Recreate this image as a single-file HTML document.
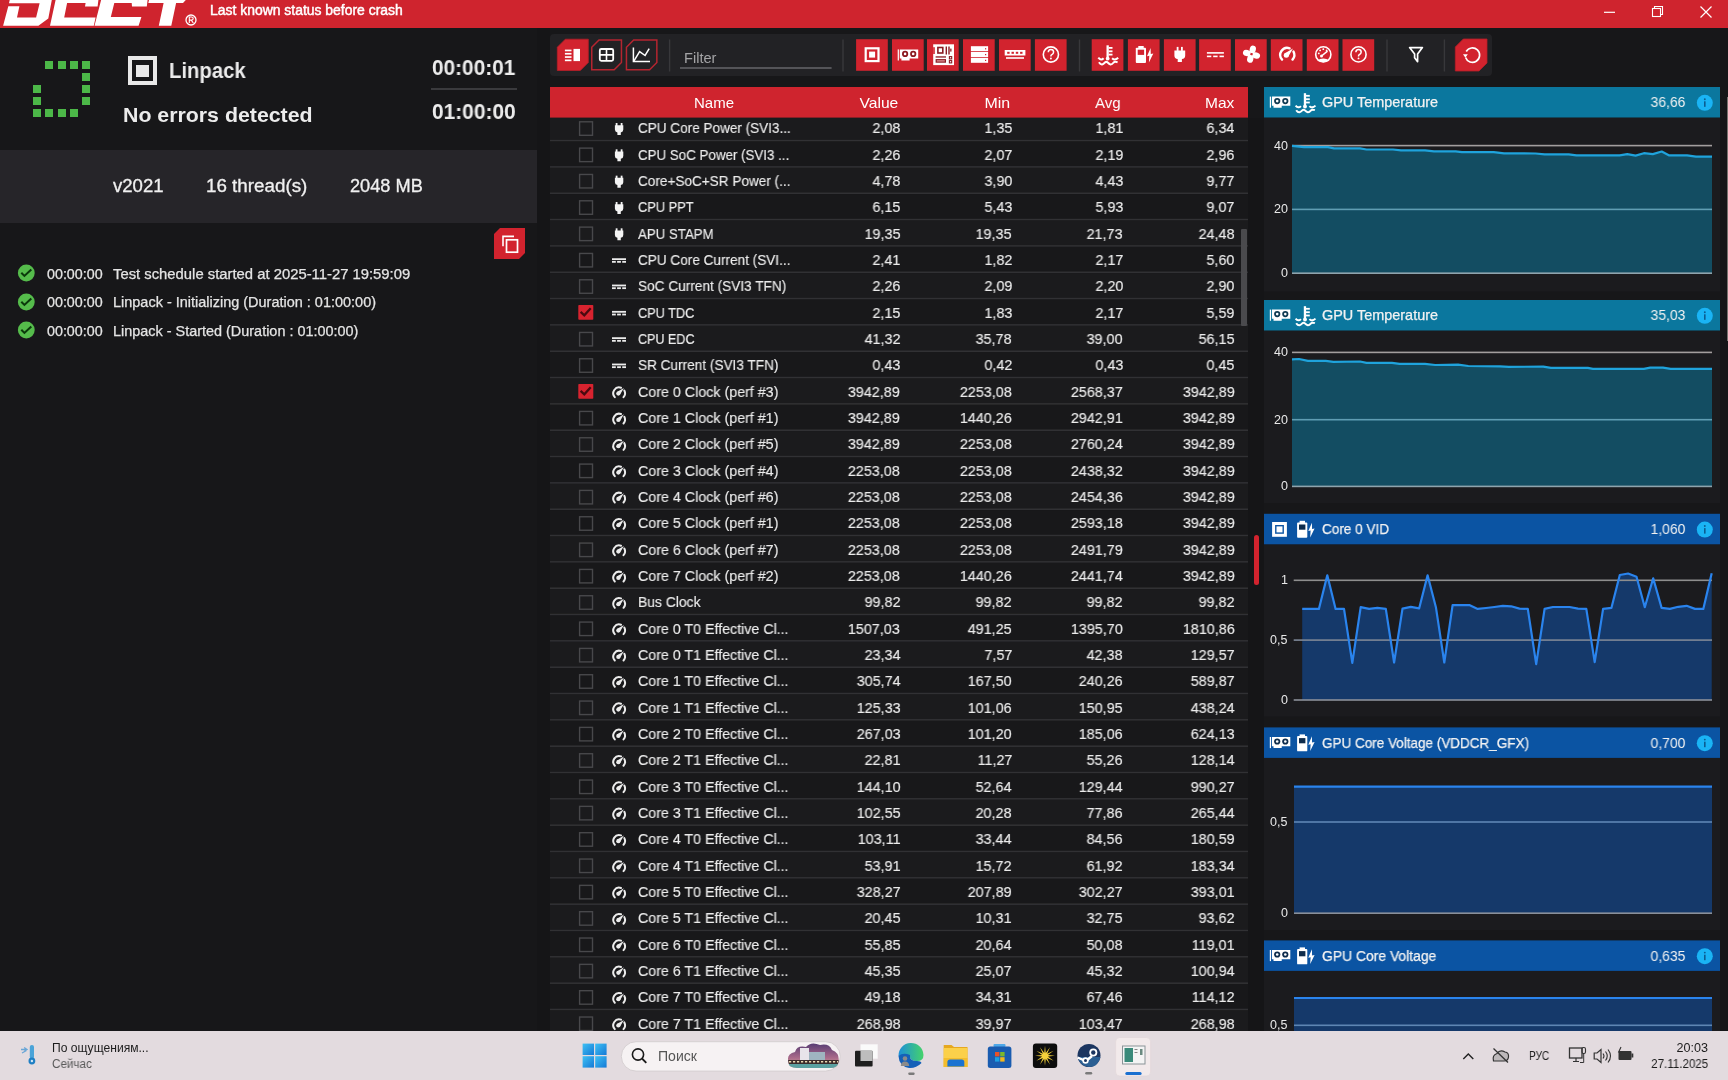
<!DOCTYPE html><html><head><meta charset="utf-8"><style>html,body{margin:0;padding:0;width:1728px;height:1080px;overflow:hidden;background:#171719;}body{position:relative;font-family:"Liberation Sans",sans-serif;}.t{position:absolute;white-space:nowrap;line-height:1;will-change:transform;}</style></head><body>
<div style="position:absolute;left:0px;top:0px;width:1728px;height:27.6px;background:#cf242e;"></div>
<div style="position:absolute;left:0px;top:27.6px;width:1728px;height:0.8px;background:#6a1a20;"></div>
<svg style="position:absolute;left:0;top:0" width="210" height="27" viewBox="0 0 210 27">
<g fill="#fff">
<path d="M9.7,0 L51.8,0 L48.3,18.4 L38.4,25.8 L3.1,25.8 L8.3,6.25 L19.4,6.25 L17,17.4 L36.1,17.4 L39.6,3.3 L9,3.3 Z"/>
<path d="M55.6,0 L98.4,0 L97.6,6.4 L85,6.4 L85.6,2.9 L67.1,2.9 L64.2,17.4 L95.6,17.4 L93.8,25.8 L50,25.8 Z"/>
<path d="M101.1,0 L147.6,0 L146.8,6.6 L132,6.6 L131.7,3.1 L114.3,3.1 L110.8,17 L141.4,17 L138.6,25.7 L94.5,25.7 Z"/>
<path d="M149,0 L185.8,0 L183,3.1 L176.1,3.1 L171.3,25.7 L158.8,25.7 L163.6,3.1 L148.3,3.1 Z"/>
</g>
<circle cx="191" cy="20" r="5" fill="none" stroke="#fff" stroke-width="1.3"/>
<path d="M189.3,23 V17 H191.5 Q193.2,17 193.2,18.6 Q193.2,20.1 191.5,20.1 H189.3 M191.3,20.1 L193.3,23" fill="none" stroke="#fff" stroke-width="1.1"/>
</svg>
<svg style="position:absolute;left:1590px;top:0" width="138" height="27" viewBox="0 0 138 27">
<path d="M14,12.3 H25" stroke="#fff" stroke-width="1.2"/>
<rect x="62.5" y="8.5" width="8" height="8" fill="none" stroke="#fff" stroke-width="1.1"/>
<path d="M64.5,8.5 V6.5 H72.5 V14.5 H70.5" fill="none" stroke="#fff" stroke-width="1.1"/>
<path d="M110.5,6.5 L121.5,17.5 M121.5,6.5 L110.5,17.5" stroke="#fff" stroke-width="1.2"/>
</svg>
<div style="position:absolute;left:0px;top:28px;width:537px;height:1003px;background:#171719;"></div>
<div style="position:absolute;left:45.400000000000006px;top:60.8px;width:8.1px;height:8.1px;background:#4cb848;"></div>
<div style="position:absolute;left:57.6px;top:60.8px;width:8.1px;height:8.1px;background:#4cb848;"></div>
<div style="position:absolute;left:69.8px;top:60.8px;width:8.1px;height:8.1px;background:#4cb848;"></div>
<div style="position:absolute;left:82.0px;top:60.8px;width:8.1px;height:8.1px;background:#4cb848;"></div>
<div style="position:absolute;left:82.0px;top:72.95px;width:8.1px;height:8.1px;background:#4cb848;"></div>
<div style="position:absolute;left:33.2px;top:85.1px;width:8.1px;height:8.1px;background:#4cb848;"></div>
<div style="position:absolute;left:82.0px;top:85.1px;width:8.1px;height:8.1px;background:#4cb848;"></div>
<div style="position:absolute;left:33.2px;top:97.25px;width:8.1px;height:8.1px;background:#4cb848;"></div>
<div style="position:absolute;left:82.0px;top:97.25px;width:8.1px;height:8.1px;background:#4cb848;"></div>
<div style="position:absolute;left:33.2px;top:109.4px;width:8.1px;height:8.1px;background:#4cb848;"></div>
<div style="position:absolute;left:45.400000000000006px;top:109.4px;width:8.1px;height:8.1px;background:#4cb848;"></div>
<div style="position:absolute;left:57.6px;top:109.4px;width:8.1px;height:8.1px;background:#4cb848;"></div>
<div style="position:absolute;left:69.8px;top:109.4px;width:8.1px;height:8.1px;background:#4cb848;"></div>
<div style="position:absolute;left:127.9px;top:55.8px;width:29.2px;height:29.7px;background:transparent;box-sizing:border-box;border:4.3px solid #e8e8e8"></div>
<div style="position:absolute;left:136.4px;top:65.2px;width:12.4px;height:11.8px;background:#e8e8e8;"></div>
<div style="position:absolute;left:431px;top:88px;width:86px;height:2px;background:#3a3a3d;"></div>
<div style="position:absolute;left:0px;top:150px;width:537px;height:73px;background:#262529;"></div>
<svg style="position:absolute;left:494px;top:228px" width="32" height="32" viewBox="0 0 32 32">
<path d="M6,0 H31 V25 L25,31 H0 V6 Z" fill="#d2232e"/>
<path d="M9,18.2 V8.4 H20" fill="none" stroke="#fff" stroke-width="1.6"/>
<rect x="12.5" y="11.8" width="11" height="12.4" fill="none" stroke="#fff" stroke-width="1.7"/>
</svg>
<svg style="position:absolute;left:17px;top:264.3px" width="19" height="18" viewBox="0 0 19 18">
<circle cx="9.3" cy="9" r="8.4" fill="#55bc4b"/>
<path d="M4.3,8.8 L7.4,11.9 L14.3,5.5" fill="none" stroke="#0b3a0b" stroke-width="2.1"/></svg>
<svg style="position:absolute;left:17px;top:292.8px" width="19" height="18" viewBox="0 0 19 18">
<circle cx="9.3" cy="9" r="8.4" fill="#55bc4b"/>
<path d="M4.3,8.8 L7.4,11.9 L14.3,5.5" fill="none" stroke="#0b3a0b" stroke-width="2.1"/></svg>
<svg style="position:absolute;left:17px;top:321.2px" width="19" height="18" viewBox="0 0 19 18">
<circle cx="9.3" cy="9" r="8.4" fill="#55bc4b"/>
<path d="M4.3,8.8 L7.4,11.9 L14.3,5.5" fill="none" stroke="#0b3a0b" stroke-width="2.1"/></svg>
<div style="position:absolute;left:537px;top:28px;width:1191px;height:1003px;background:#171719;"></div>
<div style="position:absolute;left:537.2px;top:28px;width:12.5px;height:1003px;background:#151517;"></div>
<div style="position:absolute;left:1248px;top:117.6px;width:16px;height:913.4px;background:#151517;"></div>
<div style="position:absolute;left:1720.3px;top:28px;width:7.7px;height:1003px;background:#151517;"></div>
<div style="position:absolute;left:549.7px;top:34.2px;width:942px;height:41.6px;background:#222225;border-radius:4px"></div>
<svg style="position:absolute;left:0;top:0" width="1728" height="80"><path d="M557.3,47.2 L565.3,39.2 L588.3,39.2 L588.3,62.5 L580.3,70.5 L557.3,70.5 Z" fill="#d2232e" stroke="#b81d27" stroke-width="0.8"/><path d="M591.75,47.2 L599,39.95 L621.45,39.95 L621.45,62.5 L614.2,69.75 L591.75,69.75 Z" fill="none" stroke="#b52530" stroke-width="1.5"/><path d="M626.45,47.2 L633.7,39.95 L656.85,39.95 L656.85,62.5 L649.6,69.75 L626.45,69.75 Z" fill="none" stroke="#b52530" stroke-width="1.5"/><rect x="564.9" y="49.6" width="6.6" height="1.7" fill="#fff"/><rect x="564.9" y="52.9" width="6.6" height="1.7" fill="#fff"/><rect x="564.9" y="56.2" width="6.6" height="1.7" fill="#fff"/><rect x="564.9" y="59.5" width="6.6" height="1.7" fill="#fff"/><rect x="573.5" y="48.9" width="6.5" height="12.2" fill="#fff"/><rect x="599.8" y="49" width="13.4" height="11.8" rx="1.5" fill="none" stroke="#fff" stroke-width="1.8"/><path d="M606.5,49 V60.8 M599.8,54.9 H613.2" stroke="#fff" stroke-width="1.6"/><path d="M633.4,47.5 V61.6 H650" fill="none" stroke="#fff" stroke-width="1.5"/><path d="M634,60.8 L639.6,51.6 L645.1,55.5 L649.2,48.6" fill="none" stroke="#fff" stroke-width="1.5"/><rect x="668.9" y="39.5" width="1.4" height="32" fill="#38383b"/><rect x="842.3" y="39.5" width="1.4" height="32" fill="#38383b"/><rect x="1078.8" y="39.5" width="1.4" height="32" fill="#38383b"/><rect x="1386.3" y="39.5" width="1.4" height="32" fill="#38383b"/><rect x="1443.7" y="39.5" width="1.4" height="32" fill="#38383b"/><rect x="680" y="67.3" width="151.6" height="1.4" fill="#6a6a6e"/><rect x="856.1" y="39.2" width="31.7" height="31.6" fill="#d2232e"/><rect x="892.0" y="39.2" width="31.7" height="31.6" fill="#d2232e"/><rect x="927.0" y="39.2" width="31.7" height="31.6" fill="#d2232e"/><rect x="963.0" y="39.2" width="31.7" height="31.6" fill="#d2232e"/><rect x="999.0" y="39.2" width="31.7" height="31.6" fill="#d2232e"/><rect x="1034.9" y="39.2" width="31.7" height="31.6" fill="#d2232e"/><rect x="1091.7" y="39.2" width="31.7" height="31.6" fill="#d2232e"/><rect x="1127.9" y="39.2" width="31.7" height="31.6" fill="#d2232e"/><rect x="1163.9" y="39.2" width="31.7" height="31.6" fill="#d2232e"/><rect x="1199.1" y="39.2" width="31.7" height="31.6" fill="#d2232e"/><rect x="1235.0" y="39.2" width="31.7" height="31.6" fill="#d2232e"/><rect x="1270.8" y="39.2" width="31.7" height="31.6" fill="#d2232e"/><rect x="1306.8" y="39.2" width="31.7" height="31.6" fill="#d2232e"/><rect x="1342.5" y="39.2" width="31.7" height="31.6" fill="#d2232e"/><rect x="865.7" y="48.3" width="12.8" height="12.8" fill="none" stroke="#fff" stroke-width="2.2"/><rect x="869.1" y="51.6" width="6" height="6" fill="#fff"/><path d="M899.8000000000001,49.4 H918.2 V58.599999999999994 H909.6 V60.5 H901.4000000000001 V58.599999999999994 H899.8000000000001 Z" fill="#fff"/><rect x="897.7" y="49.4" width="1.2" height="11.1" fill="#fff"/><circle cx="905.1" cy="53.9" r="3.1" fill="#8c1a20"/><circle cx="905.1" cy="53.9" r="1.3" fill="#fff"/><circle cx="913.2" cy="53.9" r="3.1" fill="#8c1a20"/><circle cx="913.2" cy="53.9" r="1.3" fill="#fff"/><rect x="933.2" y="44.3" width="20.8" height="20.8" fill="#fff"/><rect x="933.2" y="47.2" width="1.6" height="6.8" fill="#d2232e"/><rect x="937.9" y="47.5" width="4.9" height="5.5" fill="none" stroke="#8a1c24" stroke-width="1.6"/><rect x="945.6" y="46.5" width="1.4" height="8" fill="#8a1c24"/><rect x="948.3" y="46.5" width="1.4" height="8" fill="#8a1c24"/><rect x="950.2" y="48.6" width="1.3" height="3" fill="#8a1c24"/><rect x="935.6" y="56.3" width="10.4" height="1.3" fill="#8a1c24"/><rect x="936.2" y="59.7" width="9.2" height="2.4" fill="#e8a0a4" stroke="#8a1c24" stroke-width="1.2"/><rect x="949.4" y="56.6" width="2.3" height="2.3" fill="none" stroke="#8a1c24" stroke-width="1.1"/><rect x="949.4" y="60.6" width="2.3" height="2.3" fill="none" stroke="#8a1c24" stroke-width="1.1"/><rect x="970.9" y="46.2" width="17.2" height="5" fill="#fff"/><rect x="985" y="48.2" width="1.2" height="1.2" fill="#d2232e"/><rect x="970.9" y="52" width="17.2" height="5" fill="#fff"/><rect x="985" y="54" width="1.2" height="1.2" fill="#d2232e"/><rect x="970.9" y="57.8" width="17.2" height="5" fill="#fff"/><rect x="985" y="59.8" width="1.2" height="1.2" fill="#d2232e"/><rect x="1004.7" y="50" width="20.7" height="5.5" fill="#fff"/><rect x="1007.2" y="51.8" width="2.4" height="2" fill="#d2232e"/><rect x="1011.5" y="51.8" width="2.4" height="2" fill="#d2232e"/><rect x="1015.8" y="51.8" width="2.4" height="2" fill="#d2232e"/><rect x="1020.1" y="51.8" width="2.4" height="2" fill="#d2232e"/><rect x="1006" y="57.2" width="18" height="1.6" fill="#fff"/><circle cx="1050.9" cy="54.5" r="7.6" fill="none" stroke="#fff" stroke-width="1.6"/><path d="M1048.3000000000002,52.3 Q1048.3000000000002,49.5 1050.9,49.5 Q1053.6000000000001,49.5 1053.6000000000001,52.1 Q1053.6000000000001,53.9 1051.5,54.9 Q1050.9,55.3 1050.9,56.5" fill="none" stroke="#fff" stroke-width="1.5"/><circle cx="1050.9" cy="58.5" r="0.95" fill="#fff"/><g transform="translate(1098,45.3)"><rect x="8.5" y="0" width="2.3" height="14.2" fill="#fff"/><circle cx="9.7" cy="13.3" r="1.9" fill="#fff"/><rect x="10.6" y="1.7" width="3.9" height="1.8" fill="#fff"/><rect x="10.6" y="5.1" width="3.9" height="1.8" fill="#fff"/><rect x="10.6" y="8.4" width="3.9" height="1.8" fill="#fff"/><path d="M0.3,12.4 Q3,15.6 5.6,12.9 M14.1,12.9 Q16.9,15.6 20.2,12.4" fill="none" stroke="#fff" stroke-width="2"/><path d="M0.9,17 Q2.5,19.3 4.1,19.1 Q5.3,18.9 6.9,17.2 Q8.3,15.9 9.7,17.2 Q11.2,18.9 12.5,19.1 Q14,19.3 15.6,17.2 Q17,15.9 19.6,17" fill="none" stroke="#fff" stroke-width="2"/></g><rect x="1138.3" y="46" width="5.4" height="2.2" fill="#fff"/><rect x="1135.8" y="47.7" width="10.2" height="15.2" rx="0.9" fill="#fff"/><rect x="1137.7" y="49.7" width="6.4" height="5.2" fill="#d2232e"/><path d="M1150.6,47.9 L1147.0,56.3 L1149.3,55.8 L1148.8999999999999,62.6 L1153.3,53.6 L1150.8,54.1 Z" fill="#fff"/><g transform="translate(1174.4,46.9) scale(1.0)"><rect x="2.3" y="0" width="1.8" height="4" fill="#fff"/><rect x="6.6" y="0" width="1.8" height="4" fill="#fff"/><path d="M0,3.6 H10.8 V8.5 Q10.8,11.8 7.5,12 V15 H3.3 V12 Q0,11.8 0,8.5 Z" fill="#fff"/></g><rect x="1206.9" y="52.1" width="17" height="1.6" fill="#fff"/><rect x="1206.9" y="55.6" width="4.4" height="1.6" fill="#fff"/><rect x="1213.2" y="55.6" width="4.4" height="1.6" fill="#fff"/><rect x="1219.5" y="55.6" width="4.4" height="1.6" fill="#fff"/><ellipse cx="1251.5" cy="49.400000000000006" rx="3.1" ry="4" fill="#fff" transform="rotate(15 1251.5 54.2)"/><ellipse cx="1251.5" cy="49.400000000000006" rx="3.1" ry="4" fill="#fff" transform="rotate(105 1251.5 54.2)"/><ellipse cx="1251.5" cy="49.400000000000006" rx="3.1" ry="4" fill="#fff" transform="rotate(195 1251.5 54.2)"/><ellipse cx="1251.5" cy="49.400000000000006" rx="3.1" ry="4" fill="#fff" transform="rotate(285 1251.5 54.2)"/><circle cx="1251.5" cy="54.2" r="1.1" fill="#d2232e"/><path d="M1282.08,59.60 A7.02,7.02 0 0 1 1289.59,48.26 M1293.50,51.60 A7.02,7.02 0 0 1 1292.52,59.60" fill="none" stroke="#fff" stroke-width="2.40" stroke-linecap="round"/><path d="M1288.06,57.10 L1293.00,48.60 L1284.50,53.54 Z" fill="#fff"/><circle cx="1286.28" cy="55.32" r="2.52" fill="#fff"/><circle cx="1323.3" cy="54.4" r="7.6" fill="none" stroke="#fff" stroke-width="1.6"/><path d="M1317,60.8 Q1323.3,56 1329.6,60.8 Q1323.3,63.5 1317,60.8 Z" fill="#fff"/><path d="M1321.5,56 L1327.5,51.2" stroke="#fff" stroke-width="1.6"/><circle cx="1321.5" cy="56" r="1.5" fill="#fff"/><circle cx="1318.8" cy="53.4" r="0.9" fill="#fff"/><circle cx="1320.1" cy="50.4" r="0.9" fill="#fff"/><circle cx="1323.3" cy="49.199999999999996" r="0.9" fill="#fff"/><circle cx="1326.6" cy="50.4" r="0.9" fill="#fff"/><circle cx="1358.5" cy="54.4" r="7.6" fill="none" stroke="#fff" stroke-width="1.6"/><path d="M1355.9,52.199999999999996 Q1355.9,49.4 1358.5,49.4 Q1361.2,49.4 1361.2,52.0 Q1361.2,53.8 1359.1,54.8 Q1358.5,55.199999999999996 1358.5,56.4" fill="none" stroke="#fff" stroke-width="1.5"/><circle cx="1358.5" cy="58.4" r="0.95" fill="#fff"/><path d="M1409.6,47.6 H1422.4 L1417.6,54 V61.6 L1414.6,57.8 V54 Z" fill="none" stroke="#fff" stroke-width="1.7" stroke-linejoin="round"/><path d="M1455.3,47 L1463.3,39 L1487.0,39 L1487.0,63 L1479.0,71 L1455.3,71 Z" fill="#d2232e" stroke="#b81d27" stroke-width="0.8"/><path d="M1466.2,51.5 A7.2,7.2 0 1 1 1465.6,57.5" fill="none" stroke="#fff" stroke-width="1.7"/><path d="M1463,54.2 L1467.8,54.2 L1465.4,57.8 Z" fill="#fff"/></svg>
<div style="position:absolute;left:550px;top:87px;width:698px;height:30.6px;background:#cf242e;"></div>
<svg style="position:absolute;left:0;top:0" width="1728" height="1031"><rect x="550" y="117.60" width="698" height="22.20" fill="#1b1b1d"/><rect x="550" y="139.80" width="698" height="1.8" fill="#313134"/><rect x="579.6" y="121.80" width="12.9" height="13.5" fill="none" stroke="#48484b" stroke-width="1.4"/><g transform="translate(614.9,123.00)"><rect x="0.8" y="0" width="1.8" height="3" fill="#f4f4f4"/><rect x="5.8" y="0" width="1.8" height="3" fill="#f4f4f4"/><path d="M0,2.2 H8.4 V6.6 Q8.4,9.1 5.9,9.4 V12 H2.5 V9.4 Q0,9.1 0,6.6 Z" fill="#f4f4f4"/></g><rect x="550" y="141.40" width="698" height="24.73" fill="#18181a"/><rect x="550" y="166.13" width="698" height="1.8" fill="#313134"/><rect x="579.6" y="148.13" width="12.9" height="13.5" fill="none" stroke="#48484b" stroke-width="1.4"/><g transform="translate(614.9,149.33)"><rect x="0.8" y="0" width="1.8" height="3" fill="#f4f4f4"/><rect x="5.8" y="0" width="1.8" height="3" fill="#f4f4f4"/><path d="M0,2.2 H8.4 V6.6 Q8.4,9.1 5.9,9.4 V12 H2.5 V9.4 Q0,9.1 0,6.6 Z" fill="#f4f4f4"/></g><rect x="550" y="167.73" width="698" height="24.73" fill="#1b1b1d"/><rect x="550" y="192.46" width="698" height="1.8" fill="#313134"/><rect x="579.6" y="174.46" width="12.9" height="13.5" fill="none" stroke="#48484b" stroke-width="1.4"/><g transform="translate(614.9,175.66)"><rect x="0.8" y="0" width="1.8" height="3" fill="#f4f4f4"/><rect x="5.8" y="0" width="1.8" height="3" fill="#f4f4f4"/><path d="M0,2.2 H8.4 V6.6 Q8.4,9.1 5.9,9.4 V12 H2.5 V9.4 Q0,9.1 0,6.6 Z" fill="#f4f4f4"/></g><rect x="550" y="194.06" width="698" height="24.73" fill="#18181a"/><rect x="550" y="218.79" width="698" height="1.8" fill="#313134"/><rect x="579.6" y="200.79" width="12.9" height="13.5" fill="none" stroke="#48484b" stroke-width="1.4"/><g transform="translate(614.9,201.99)"><rect x="0.8" y="0" width="1.8" height="3" fill="#f4f4f4"/><rect x="5.8" y="0" width="1.8" height="3" fill="#f4f4f4"/><path d="M0,2.2 H8.4 V6.6 Q8.4,9.1 5.9,9.4 V12 H2.5 V9.4 Q0,9.1 0,6.6 Z" fill="#f4f4f4"/></g><rect x="550" y="220.39" width="698" height="24.73" fill="#1b1b1d"/><rect x="550" y="245.12" width="698" height="1.8" fill="#313134"/><rect x="579.6" y="227.12" width="12.9" height="13.5" fill="none" stroke="#48484b" stroke-width="1.4"/><g transform="translate(614.9,228.32)"><rect x="0.8" y="0" width="1.8" height="3" fill="#f4f4f4"/><rect x="5.8" y="0" width="1.8" height="3" fill="#f4f4f4"/><path d="M0,2.2 H8.4 V6.6 Q8.4,9.1 5.9,9.4 V12 H2.5 V9.4 Q0,9.1 0,6.6 Z" fill="#f4f4f4"/></g><rect x="550" y="246.72" width="698" height="24.73" fill="#18181a"/><rect x="550" y="271.45" width="698" height="1.8" fill="#313134"/><rect x="579.6" y="253.45" width="12.9" height="13.5" fill="none" stroke="#48484b" stroke-width="1.4"/><rect x="612" y="258.25" width="14" height="1.8" fill="#ececec"/><rect x="612" y="260.95" width="3.8" height="1.8" fill="#ececec"/><rect x="617.1" y="260.95" width="3.8" height="1.8" fill="#ececec"/><rect x="622.2" y="260.95" width="3.8" height="1.8" fill="#ececec"/><rect x="550" y="273.05" width="698" height="24.73" fill="#1b1b1d"/><rect x="550" y="297.78" width="698" height="1.8" fill="#313134"/><rect x="579.6" y="279.78" width="12.9" height="13.5" fill="none" stroke="#48484b" stroke-width="1.4"/><rect x="612" y="284.58" width="14" height="1.8" fill="#ececec"/><rect x="612" y="287.28" width="3.8" height="1.8" fill="#ececec"/><rect x="617.1" y="287.28" width="3.8" height="1.8" fill="#ececec"/><rect x="622.2" y="287.28" width="3.8" height="1.8" fill="#ececec"/><rect x="550" y="299.38" width="698" height="24.73" fill="#18181a"/><rect x="550" y="324.11" width="698" height="1.8" fill="#313134"/><rect x="578.3" y="304.91" width="15" height="14.8" rx="0.8" fill="#d8232f"/><path d="M580.6,311.91 L584.3,315.31 L590.7,308.21" fill="none" stroke="#4a0a10" stroke-width="2.3"/><rect x="612" y="310.91" width="14" height="1.8" fill="#ececec"/><rect x="612" y="313.61" width="3.8" height="1.8" fill="#ececec"/><rect x="617.1" y="313.61" width="3.8" height="1.8" fill="#ececec"/><rect x="622.2" y="313.61" width="3.8" height="1.8" fill="#ececec"/><rect x="550" y="325.71" width="698" height="24.73" fill="#1b1b1d"/><rect x="550" y="350.44" width="698" height="1.8" fill="#313134"/><rect x="579.6" y="332.44" width="12.9" height="13.5" fill="none" stroke="#48484b" stroke-width="1.4"/><rect x="612" y="337.24" width="14" height="1.8" fill="#ececec"/><rect x="612" y="339.94" width="3.8" height="1.8" fill="#ececec"/><rect x="617.1" y="339.94" width="3.8" height="1.8" fill="#ececec"/><rect x="622.2" y="339.94" width="3.8" height="1.8" fill="#ececec"/><rect x="550" y="352.04" width="698" height="24.73" fill="#18181a"/><rect x="550" y="376.77" width="698" height="1.8" fill="#313134"/><rect x="579.6" y="358.77" width="12.9" height="13.5" fill="none" stroke="#48484b" stroke-width="1.4"/><rect x="612" y="363.57" width="14" height="1.8" fill="#ececec"/><rect x="612" y="366.27" width="3.8" height="1.8" fill="#ececec"/><rect x="617.1" y="366.27" width="3.8" height="1.8" fill="#ececec"/><rect x="622.2" y="366.27" width="3.8" height="1.8" fill="#ececec"/><rect x="550" y="378.37" width="698" height="24.73" fill="#1b1b1d"/><rect x="550" y="403.10" width="698" height="1.8" fill="#313134"/><rect x="578.3" y="383.90" width="15" height="14.8" rx="0.8" fill="#d8232f"/><path d="M580.6,390.90 L584.3,394.30 L590.7,387.20" fill="none" stroke="#4a0a10" stroke-width="2.3"/><path d="M614.80,397.16 A5.85,5.85 0 0 1 621.05,387.72 M624.32,390.50 A5.85,5.85 0 0 1 623.50,397.16" fill="none" stroke="#ececec" stroke-width="2.00" stroke-linecap="round"/><path d="M619.78,395.08 L623.90,388.00 L616.82,392.12 Z" fill="#ececec"/><circle cx="618.30" cy="393.60" r="2.10" fill="#ececec"/><rect x="550" y="404.70" width="698" height="24.73" fill="#18181a"/><rect x="550" y="429.43" width="698" height="1.8" fill="#313134"/><rect x="579.6" y="411.43" width="12.9" height="13.5" fill="none" stroke="#48484b" stroke-width="1.4"/><path d="M614.80,423.49 A5.85,5.85 0 0 1 621.05,414.05 M624.32,416.83 A5.85,5.85 0 0 1 623.50,423.49" fill="none" stroke="#ececec" stroke-width="2.00" stroke-linecap="round"/><path d="M619.78,421.41 L623.90,414.33 L616.82,418.45 Z" fill="#ececec"/><circle cx="618.30" cy="419.93" r="2.10" fill="#ececec"/><rect x="550" y="431.03" width="698" height="24.73" fill="#1b1b1d"/><rect x="550" y="455.76" width="698" height="1.8" fill="#313134"/><rect x="579.6" y="437.76" width="12.9" height="13.5" fill="none" stroke="#48484b" stroke-width="1.4"/><path d="M614.80,449.82 A5.85,5.85 0 0 1 621.05,440.38 M624.32,443.16 A5.85,5.85 0 0 1 623.50,449.82" fill="none" stroke="#ececec" stroke-width="2.00" stroke-linecap="round"/><path d="M619.78,447.74 L623.90,440.66 L616.82,444.78 Z" fill="#ececec"/><circle cx="618.30" cy="446.26" r="2.10" fill="#ececec"/><rect x="550" y="457.36" width="698" height="24.73" fill="#18181a"/><rect x="550" y="482.09" width="698" height="1.8" fill="#313134"/><rect x="579.6" y="464.09" width="12.9" height="13.5" fill="none" stroke="#48484b" stroke-width="1.4"/><path d="M614.80,476.15 A5.85,5.85 0 0 1 621.05,466.71 M624.32,469.49 A5.85,5.85 0 0 1 623.50,476.15" fill="none" stroke="#ececec" stroke-width="2.00" stroke-linecap="round"/><path d="M619.78,474.07 L623.90,466.99 L616.82,471.11 Z" fill="#ececec"/><circle cx="618.30" cy="472.59" r="2.10" fill="#ececec"/><rect x="550" y="483.69" width="698" height="24.73" fill="#1b1b1d"/><rect x="550" y="508.42" width="698" height="1.8" fill="#313134"/><rect x="579.6" y="490.42" width="12.9" height="13.5" fill="none" stroke="#48484b" stroke-width="1.4"/><path d="M614.80,502.48 A5.85,5.85 0 0 1 621.05,493.04 M624.32,495.82 A5.85,5.85 0 0 1 623.50,502.48" fill="none" stroke="#ececec" stroke-width="2.00" stroke-linecap="round"/><path d="M619.78,500.40 L623.90,493.32 L616.82,497.44 Z" fill="#ececec"/><circle cx="618.30" cy="498.92" r="2.10" fill="#ececec"/><rect x="550" y="510.02" width="698" height="24.73" fill="#18181a"/><rect x="550" y="534.75" width="698" height="1.8" fill="#313134"/><rect x="579.6" y="516.75" width="12.9" height="13.5" fill="none" stroke="#48484b" stroke-width="1.4"/><path d="M614.80,528.81 A5.85,5.85 0 0 1 621.05,519.37 M624.32,522.15 A5.85,5.85 0 0 1 623.50,528.81" fill="none" stroke="#ececec" stroke-width="2.00" stroke-linecap="round"/><path d="M619.78,526.73 L623.90,519.65 L616.82,523.77 Z" fill="#ececec"/><circle cx="618.30" cy="525.25" r="2.10" fill="#ececec"/><rect x="550" y="536.35" width="698" height="24.73" fill="#1b1b1d"/><rect x="550" y="561.08" width="698" height="1.8" fill="#313134"/><rect x="579.6" y="543.08" width="12.9" height="13.5" fill="none" stroke="#48484b" stroke-width="1.4"/><path d="M614.80,555.14 A5.85,5.85 0 0 1 621.05,545.70 M624.32,548.48 A5.85,5.85 0 0 1 623.50,555.14" fill="none" stroke="#ececec" stroke-width="2.00" stroke-linecap="round"/><path d="M619.78,553.06 L623.90,545.98 L616.82,550.10 Z" fill="#ececec"/><circle cx="618.30" cy="551.58" r="2.10" fill="#ececec"/><rect x="550" y="562.68" width="698" height="24.73" fill="#18181a"/><rect x="550" y="587.41" width="698" height="1.8" fill="#313134"/><rect x="579.6" y="569.41" width="12.9" height="13.5" fill="none" stroke="#48484b" stroke-width="1.4"/><path d="M614.80,581.47 A5.85,5.85 0 0 1 621.05,572.03 M624.32,574.81 A5.85,5.85 0 0 1 623.50,581.47" fill="none" stroke="#ececec" stroke-width="2.00" stroke-linecap="round"/><path d="M619.78,579.39 L623.90,572.31 L616.82,576.43 Z" fill="#ececec"/><circle cx="618.30" cy="577.91" r="2.10" fill="#ececec"/><rect x="550" y="589.01" width="698" height="24.73" fill="#1b1b1d"/><rect x="550" y="613.74" width="698" height="1.8" fill="#313134"/><rect x="579.6" y="595.74" width="12.9" height="13.5" fill="none" stroke="#48484b" stroke-width="1.4"/><path d="M614.80,607.80 A5.85,5.85 0 0 1 621.05,598.36 M624.32,601.14 A5.85,5.85 0 0 1 623.50,607.80" fill="none" stroke="#ececec" stroke-width="2.00" stroke-linecap="round"/><path d="M619.78,605.72 L623.90,598.64 L616.82,602.76 Z" fill="#ececec"/><circle cx="618.30" cy="604.24" r="2.10" fill="#ececec"/><rect x="550" y="615.34" width="698" height="24.73" fill="#18181a"/><rect x="550" y="640.07" width="698" height="1.8" fill="#313134"/><rect x="579.6" y="622.07" width="12.9" height="13.5" fill="none" stroke="#48484b" stroke-width="1.4"/><path d="M614.80,634.13 A5.85,5.85 0 0 1 621.05,624.69 M624.32,627.47 A5.85,5.85 0 0 1 623.50,634.13" fill="none" stroke="#ececec" stroke-width="2.00" stroke-linecap="round"/><path d="M619.78,632.05 L623.90,624.97 L616.82,629.09 Z" fill="#ececec"/><circle cx="618.30" cy="630.57" r="2.10" fill="#ececec"/><rect x="550" y="641.67" width="698" height="24.73" fill="#1b1b1d"/><rect x="550" y="666.40" width="698" height="1.8" fill="#313134"/><rect x="579.6" y="648.40" width="12.9" height="13.5" fill="none" stroke="#48484b" stroke-width="1.4"/><path d="M614.80,660.46 A5.85,5.85 0 0 1 621.05,651.02 M624.32,653.80 A5.85,5.85 0 0 1 623.50,660.46" fill="none" stroke="#ececec" stroke-width="2.00" stroke-linecap="round"/><path d="M619.78,658.38 L623.90,651.30 L616.82,655.42 Z" fill="#ececec"/><circle cx="618.30" cy="656.90" r="2.10" fill="#ececec"/><rect x="550" y="668.00" width="698" height="24.73" fill="#18181a"/><rect x="550" y="692.73" width="698" height="1.8" fill="#313134"/><rect x="579.6" y="674.73" width="12.9" height="13.5" fill="none" stroke="#48484b" stroke-width="1.4"/><path d="M614.80,686.79 A5.85,5.85 0 0 1 621.05,677.35 M624.32,680.13 A5.85,5.85 0 0 1 623.50,686.79" fill="none" stroke="#ececec" stroke-width="2.00" stroke-linecap="round"/><path d="M619.78,684.71 L623.90,677.63 L616.82,681.75 Z" fill="#ececec"/><circle cx="618.30" cy="683.23" r="2.10" fill="#ececec"/><rect x="550" y="694.33" width="698" height="24.73" fill="#1b1b1d"/><rect x="550" y="719.06" width="698" height="1.8" fill="#313134"/><rect x="579.6" y="701.06" width="12.9" height="13.5" fill="none" stroke="#48484b" stroke-width="1.4"/><path d="M614.80,713.12 A5.85,5.85 0 0 1 621.05,703.68 M624.32,706.46 A5.85,5.85 0 0 1 623.50,713.12" fill="none" stroke="#ececec" stroke-width="2.00" stroke-linecap="round"/><path d="M619.78,711.04 L623.90,703.96 L616.82,708.08 Z" fill="#ececec"/><circle cx="618.30" cy="709.56" r="2.10" fill="#ececec"/><rect x="550" y="720.66" width="698" height="24.73" fill="#18181a"/><rect x="550" y="745.39" width="698" height="1.8" fill="#313134"/><rect x="579.6" y="727.39" width="12.9" height="13.5" fill="none" stroke="#48484b" stroke-width="1.4"/><path d="M614.80,739.45 A5.85,5.85 0 0 1 621.05,730.01 M624.32,732.79 A5.85,5.85 0 0 1 623.50,739.45" fill="none" stroke="#ececec" stroke-width="2.00" stroke-linecap="round"/><path d="M619.78,737.37 L623.90,730.29 L616.82,734.41 Z" fill="#ececec"/><circle cx="618.30" cy="735.89" r="2.10" fill="#ececec"/><rect x="550" y="746.99" width="698" height="24.73" fill="#1b1b1d"/><rect x="550" y="771.72" width="698" height="1.8" fill="#313134"/><rect x="579.6" y="753.72" width="12.9" height="13.5" fill="none" stroke="#48484b" stroke-width="1.4"/><path d="M614.80,765.78 A5.85,5.85 0 0 1 621.05,756.34 M624.32,759.12 A5.85,5.85 0 0 1 623.50,765.78" fill="none" stroke="#ececec" stroke-width="2.00" stroke-linecap="round"/><path d="M619.78,763.70 L623.90,756.62 L616.82,760.74 Z" fill="#ececec"/><circle cx="618.30" cy="762.22" r="2.10" fill="#ececec"/><rect x="550" y="773.32" width="698" height="24.73" fill="#18181a"/><rect x="550" y="798.05" width="698" height="1.8" fill="#313134"/><rect x="579.6" y="780.05" width="12.9" height="13.5" fill="none" stroke="#48484b" stroke-width="1.4"/><path d="M614.80,792.11 A5.85,5.85 0 0 1 621.05,782.67 M624.32,785.45 A5.85,5.85 0 0 1 623.50,792.11" fill="none" stroke="#ececec" stroke-width="2.00" stroke-linecap="round"/><path d="M619.78,790.03 L623.90,782.95 L616.82,787.07 Z" fill="#ececec"/><circle cx="618.30" cy="788.55" r="2.10" fill="#ececec"/><rect x="550" y="799.65" width="698" height="24.73" fill="#1b1b1d"/><rect x="550" y="824.38" width="698" height="1.8" fill="#313134"/><rect x="579.6" y="806.38" width="12.9" height="13.5" fill="none" stroke="#48484b" stroke-width="1.4"/><path d="M614.80,818.44 A5.85,5.85 0 0 1 621.05,809.00 M624.32,811.78 A5.85,5.85 0 0 1 623.50,818.44" fill="none" stroke="#ececec" stroke-width="2.00" stroke-linecap="round"/><path d="M619.78,816.36 L623.90,809.28 L616.82,813.40 Z" fill="#ececec"/><circle cx="618.30" cy="814.88" r="2.10" fill="#ececec"/><rect x="550" y="825.98" width="698" height="24.73" fill="#18181a"/><rect x="550" y="850.71" width="698" height="1.8" fill="#313134"/><rect x="579.6" y="832.71" width="12.9" height="13.5" fill="none" stroke="#48484b" stroke-width="1.4"/><path d="M614.80,844.77 A5.85,5.85 0 0 1 621.05,835.33 M624.32,838.11 A5.85,5.85 0 0 1 623.50,844.77" fill="none" stroke="#ececec" stroke-width="2.00" stroke-linecap="round"/><path d="M619.78,842.69 L623.90,835.61 L616.82,839.73 Z" fill="#ececec"/><circle cx="618.30" cy="841.21" r="2.10" fill="#ececec"/><rect x="550" y="852.31" width="698" height="24.73" fill="#1b1b1d"/><rect x="550" y="877.04" width="698" height="1.8" fill="#313134"/><rect x="579.6" y="859.04" width="12.9" height="13.5" fill="none" stroke="#48484b" stroke-width="1.4"/><path d="M614.80,871.10 A5.85,5.85 0 0 1 621.05,861.66 M624.32,864.44 A5.85,5.85 0 0 1 623.50,871.10" fill="none" stroke="#ececec" stroke-width="2.00" stroke-linecap="round"/><path d="M619.78,869.02 L623.90,861.94 L616.82,866.06 Z" fill="#ececec"/><circle cx="618.30" cy="867.54" r="2.10" fill="#ececec"/><rect x="550" y="878.64" width="698" height="24.73" fill="#18181a"/><rect x="550" y="903.37" width="698" height="1.8" fill="#313134"/><rect x="579.6" y="885.37" width="12.9" height="13.5" fill="none" stroke="#48484b" stroke-width="1.4"/><path d="M614.80,897.43 A5.85,5.85 0 0 1 621.05,887.99 M624.32,890.77 A5.85,5.85 0 0 1 623.50,897.43" fill="none" stroke="#ececec" stroke-width="2.00" stroke-linecap="round"/><path d="M619.78,895.35 L623.90,888.27 L616.82,892.39 Z" fill="#ececec"/><circle cx="618.30" cy="893.87" r="2.10" fill="#ececec"/><rect x="550" y="904.97" width="698" height="24.73" fill="#1b1b1d"/><rect x="550" y="929.70" width="698" height="1.8" fill="#313134"/><rect x="579.6" y="911.70" width="12.9" height="13.5" fill="none" stroke="#48484b" stroke-width="1.4"/><path d="M614.80,923.76 A5.85,5.85 0 0 1 621.05,914.32 M624.32,917.10 A5.85,5.85 0 0 1 623.50,923.76" fill="none" stroke="#ececec" stroke-width="2.00" stroke-linecap="round"/><path d="M619.78,921.68 L623.90,914.60 L616.82,918.72 Z" fill="#ececec"/><circle cx="618.30" cy="920.20" r="2.10" fill="#ececec"/><rect x="550" y="931.30" width="698" height="24.73" fill="#18181a"/><rect x="550" y="956.03" width="698" height="1.8" fill="#313134"/><rect x="579.6" y="938.03" width="12.9" height="13.5" fill="none" stroke="#48484b" stroke-width="1.4"/><path d="M614.80,950.09 A5.85,5.85 0 0 1 621.05,940.65 M624.32,943.43 A5.85,5.85 0 0 1 623.50,950.09" fill="none" stroke="#ececec" stroke-width="2.00" stroke-linecap="round"/><path d="M619.78,948.01 L623.90,940.93 L616.82,945.05 Z" fill="#ececec"/><circle cx="618.30" cy="946.53" r="2.10" fill="#ececec"/><rect x="550" y="957.63" width="698" height="24.73" fill="#1b1b1d"/><rect x="550" y="982.36" width="698" height="1.8" fill="#313134"/><rect x="579.6" y="964.36" width="12.9" height="13.5" fill="none" stroke="#48484b" stroke-width="1.4"/><path d="M614.80,976.42 A5.85,5.85 0 0 1 621.05,966.98 M624.32,969.76 A5.85,5.85 0 0 1 623.50,976.42" fill="none" stroke="#ececec" stroke-width="2.00" stroke-linecap="round"/><path d="M619.78,974.34 L623.90,967.26 L616.82,971.38 Z" fill="#ececec"/><circle cx="618.30" cy="972.86" r="2.10" fill="#ececec"/><rect x="550" y="983.96" width="698" height="24.73" fill="#18181a"/><rect x="550" y="1008.69" width="698" height="1.8" fill="#313134"/><rect x="579.6" y="990.69" width="12.9" height="13.5" fill="none" stroke="#48484b" stroke-width="1.4"/><path d="M614.80,1002.75 A5.85,5.85 0 0 1 621.05,993.31 M624.32,996.09 A5.85,5.85 0 0 1 623.50,1002.75" fill="none" stroke="#ececec" stroke-width="2.00" stroke-linecap="round"/><path d="M619.78,1000.67 L623.90,993.59 L616.82,997.71 Z" fill="#ececec"/><circle cx="618.30" cy="999.19" r="2.10" fill="#ececec"/><rect x="550" y="1010.29" width="698" height="24.73" fill="#1b1b1d"/><rect x="579.6" y="1017.02" width="12.9" height="13.5" fill="none" stroke="#48484b" stroke-width="1.4"/><path d="M614.80,1029.08 A5.85,5.85 0 0 1 621.05,1019.64 M624.32,1022.42 A5.85,5.85 0 0 1 623.50,1029.08" fill="none" stroke="#ececec" stroke-width="2.00" stroke-linecap="round"/><path d="M619.78,1027.00 L623.90,1019.92 L616.82,1024.04 Z" fill="#ececec"/><circle cx="618.30" cy="1025.52" r="2.10" fill="#ececec"/></svg>
<div style="position:absolute;left:1240.8px;top:229px;width:6.5px;height:97.4px;background:#4a4a4d;border-radius:1px"></div>
<div style="position:absolute;left:1253.6px;top:535.3px;width:5.6px;height:49.7px;background:#d2232e;border-radius:3px"></div>
<div style="position:absolute;left:1726.8px;top:96.7px;width:1.2px;height:244px;background:#77726e;"></div>
<svg style="position:absolute;left:0;top:0" width="1728" height="1031"><rect x="1264" y="117.5" width="456" height="174.0" fill="#1b1b1e"/><rect x="1264" y="87" width="456" height="30.5" fill="#0b779e"/><path d="M1271.8999999999999,96.6 H1290.3 V105.8 H1281.7 V107.69999999999999 H1273.5 V105.8 H1271.8999999999999 Z" fill="#fff"/><rect x="1269.8" y="96.6" width="1.2" height="11.1" fill="#fff"/><circle cx="1277.2" cy="101.1" r="3.1" fill="#0f3a52"/><circle cx="1277.2" cy="101.1" r="1.3" fill="#fff"/><circle cx="1285.3" cy="101.1" r="3.1" fill="#0f3a52"/><circle cx="1285.3" cy="101.1" r="1.3" fill="#fff"/><g transform="translate(1295.3,93.2)"><rect x="8.5" y="0" width="2.3" height="14.2" fill="#fff"/><circle cx="9.7" cy="13.3" r="1.9" fill="#fff"/><rect x="10.6" y="1.7" width="3.9" height="1.8" fill="#fff"/><rect x="10.6" y="5.1" width="3.9" height="1.8" fill="#fff"/><rect x="10.6" y="8.4" width="3.9" height="1.8" fill="#fff"/><path d="M0.3,12.4 Q3,15.6 5.6,12.9 M14.1,12.9 Q16.9,15.6 20.2,12.4" fill="none" stroke="#fff" stroke-width="2"/><path d="M0.9,17 Q2.5,19.3 4.1,19.1 Q5.3,18.9 6.9,17.2 Q8.3,15.9 9.7,17.2 Q11.2,18.9 12.5,19.1 Q14,19.3 15.6,17.2 Q17,15.9 19.6,17" fill="none" stroke="#fff" stroke-width="2"/></g><circle cx="1704.8" cy="102.8" r="8" fill="#1ab4f5"/><rect x="1704.0" y="101.3" width="1.6" height="5.5" fill="#0b5d92"/><circle cx="1704.8" cy="99.2" r="0.95" fill="#0b5d92"/><polygon points="1292.0,273.2 1292.0,145.8 1304.0,147.1 1328.0,147.1 1334.0,148.4 1360.0,148.4 1366.5,149.5 1393.0,149.5 1401.0,150.3 1425.0,150.3 1434.0,151.3 1455.6,151.3 1462.0,152.2 1493.8,152.2 1504.0,153.4 1535.6,153.5 1544.6,154.4 1568.7,154.4 1576.4,155.4 1619.7,155.4 1627.3,154.1 1635.6,155.6 1643.9,153.2 1652.8,154.1 1661.7,151.5 1669.3,155.4 1687.1,155.4 1696.0,156.6 1712.0,156.6 1712.0,273.2" fill="#134d62"/><rect x="1292" y="144.79999999999998" width="420" height="1.6" fill="#a39e9e"/><rect x="1292" y="208.6" width="420" height="1.6" fill="#5f9db3"/><rect x="1292" y="272.4" width="420" height="1.6" fill="#8fa4ad"/><polyline points="1292.0,145.8 1304.0,147.1 1328.0,147.1 1334.0,148.4 1360.0,148.4 1366.5,149.5 1393.0,149.5 1401.0,150.3 1425.0,150.3 1434.0,151.3 1455.6,151.3 1462.0,152.2 1493.8,152.2 1504.0,153.4 1535.6,153.5 1544.6,154.4 1568.7,154.4 1576.4,155.4 1619.7,155.4 1627.3,154.1 1635.6,155.6 1643.9,153.2 1652.8,154.1 1661.7,151.5 1669.3,155.4 1687.1,155.4 1696.0,156.6 1712.0,156.6" fill="none" stroke="#1fa3dc" stroke-width="2.2" stroke-linejoin="round"/><rect x="1264" y="330.5" width="456" height="172.5" fill="#1b1b1e"/><rect x="1264" y="300" width="456" height="30.5" fill="#0b779e"/><path d="M1271.8999999999999,309.6 H1290.3 V318.8 H1281.7 V320.70000000000005 H1273.5 V318.8 H1271.8999999999999 Z" fill="#fff"/><rect x="1269.8" y="309.6" width="1.2" height="11.1" fill="#fff"/><circle cx="1277.2" cy="314.1" r="3.1" fill="#0f3a52"/><circle cx="1277.2" cy="314.1" r="1.3" fill="#fff"/><circle cx="1285.3" cy="314.1" r="3.1" fill="#0f3a52"/><circle cx="1285.3" cy="314.1" r="1.3" fill="#fff"/><g transform="translate(1295.3,306.2)"><rect x="8.5" y="0" width="2.3" height="14.2" fill="#fff"/><circle cx="9.7" cy="13.3" r="1.9" fill="#fff"/><rect x="10.6" y="1.7" width="3.9" height="1.8" fill="#fff"/><rect x="10.6" y="5.1" width="3.9" height="1.8" fill="#fff"/><rect x="10.6" y="8.4" width="3.9" height="1.8" fill="#fff"/><path d="M0.3,12.4 Q3,15.6 5.6,12.9 M14.1,12.9 Q16.9,15.6 20.2,12.4" fill="none" stroke="#fff" stroke-width="2"/><path d="M0.9,17 Q2.5,19.3 4.1,19.1 Q5.3,18.9 6.9,17.2 Q8.3,15.9 9.7,17.2 Q11.2,18.9 12.5,19.1 Q14,19.3 15.6,17.2 Q17,15.9 19.6,17" fill="none" stroke="#fff" stroke-width="2"/></g><circle cx="1704.8" cy="315.8" r="8" fill="#1ab4f5"/><rect x="1704.0" y="314.3" width="1.6" height="5.5" fill="#0b5d92"/><circle cx="1704.8" cy="312.2" r="0.95" fill="#0b5d92"/><polygon points="1292.0,486.4 1292.0,359.3 1299.0,359.0 1307.9,360.9 1325.7,360.9 1333.4,361.9 1360.1,361.5 1366.5,362.8 1392.0,362.8 1399.6,363.8 1425.0,363.8 1435.2,365.0 1458.1,364.7 1468.3,366.0 1500.0,366.4 1508.9,366.9 1543.3,366.6 1550.9,367.9 1587.8,367.9 1592.9,368.9 1643.9,368.9 1650.2,367.7 1663.0,367.7 1670.6,368.9 1712.0,368.9 1712.0,486.4" fill="#134d62"/><rect x="1292" y="351.59999999999997" width="420" height="1.6" fill="#a39e9e"/><rect x="1292" y="418.9" width="420" height="1.6" fill="#5f9db3"/><rect x="1292" y="485.59999999999997" width="420" height="1.6" fill="#8fa4ad"/><polyline points="1292.0,359.3 1299.0,359.0 1307.9,360.9 1325.7,360.9 1333.4,361.9 1360.1,361.5 1366.5,362.8 1392.0,362.8 1399.6,363.8 1425.0,363.8 1435.2,365.0 1458.1,364.7 1468.3,366.0 1500.0,366.4 1508.9,366.9 1543.3,366.6 1550.9,367.9 1587.8,367.9 1592.9,368.9 1643.9,368.9 1650.2,367.7 1663.0,367.7 1670.6,368.9 1712.0,368.9" fill="none" stroke="#1fa3dc" stroke-width="2.2" stroke-linejoin="round"/><rect x="1264" y="544.3" width="456" height="172.20000000000005" fill="#1b1b1e"/><rect x="1264" y="513.8" width="456" height="30.5" fill="#0b54a3"/><rect x="1273.6" y="523.5" width="11.8" height="11.8" fill="none" stroke="#fff" stroke-width="3"/><rect x="1276.5" y="526.4" width="6" height="6" fill="#fff"/><rect x="1299.6" y="520.8" width="5.4" height="2.2" fill="#fff"/><rect x="1297.1" y="522.5" width="10.2" height="15.2" rx="0.9" fill="#fff"/><rect x="1299.0" y="524.5" width="6.4" height="5.2" fill="#0e2c4c"/><path d="M1311.8999999999999,522.6999999999999 L1308.3,531.0999999999999 L1310.6,530.5999999999999 L1310.1999999999998,537.4 L1314.6,528.4 L1312.1,528.9 Z" fill="#fff"/><circle cx="1704.8" cy="529.5999999999999" r="8" fill="#1ab4f5"/><rect x="1704.0" y="528.0999999999999" width="1.6" height="5.5" fill="#0b5d92"/><circle cx="1704.8" cy="525.9999999999999" r="0.95" fill="#0b5d92"/><polygon points="1302.2,700 1302.2,608.9 1310.6,608.9 1318.9,608.9 1327.3,575.3 1335.6,608.9 1344.0,608.9 1352.3,662.8 1360.7,607.2 1369.1,608.9 1377.4,607.9 1385.8,608.9 1394.1,662.5 1402.5,608.6 1410.8,606.8 1419.2,608.3 1427.6,575.3 1435.9,607.2 1444.3,662.5 1452.6,605.1 1461.0,605.1 1469.3,605.1 1477.7,608.9 1486.1,608.0 1494.4,607.0 1502.8,605.8 1511.1,606.3 1519.5,608.6 1527.8,608.9 1536.2,664.2 1544.6,608.9 1552.9,607.0 1561.3,607.0 1569.6,607.0 1578.0,608.6 1586.3,608.9 1594.7,662.1 1603.1,608.9 1611.4,607.9 1619.8,575.0 1628.1,573.5 1636.5,576.7 1644.8,607.2 1653.2,578.3 1661.6,607.9 1669.9,608.9 1678.3,606.8 1686.6,605.8 1695.0,608.9 1703.3,608.9 1711.7,573.2 1711.7,700" fill="#15396a"/><rect x="1293.7" y="579.5" width="418.29999999999995" height="1.6" fill="#8e8e8e"/><rect x="1293.7" y="639.3000000000001" width="418.29999999999995" height="1.6" fill="#7d8796"/><rect x="1293.7" y="699.2" width="418.29999999999995" height="1.6" fill="#8a909a"/><polyline points="1302.2,608.9 1310.6,608.9 1318.9,608.9 1327.3,575.3 1335.6,608.9 1344.0,608.9 1352.3,662.8 1360.7,607.2 1369.1,608.9 1377.4,607.9 1385.8,608.9 1394.1,662.5 1402.5,608.6 1410.8,606.8 1419.2,608.3 1427.6,575.3 1435.9,607.2 1444.3,662.5 1452.6,605.1 1461.0,605.1 1469.3,605.1 1477.7,608.9 1486.1,608.0 1494.4,607.0 1502.8,605.8 1511.1,606.3 1519.5,608.6 1527.8,608.9 1536.2,664.2 1544.6,608.9 1552.9,607.0 1561.3,607.0 1569.6,607.0 1578.0,608.6 1586.3,608.9 1594.7,662.1 1603.1,608.9 1611.4,607.9 1619.8,575.0 1628.1,573.5 1636.5,576.7 1644.8,607.2 1653.2,578.3 1661.6,607.9 1669.9,608.9 1678.3,606.8 1686.6,605.8 1695.0,608.9 1703.3,608.9 1711.7,573.2" fill="none" stroke="#2a84ee" stroke-width="2.2" stroke-linejoin="round"/><rect x="1264" y="757.9" width="456" height="172.10000000000002" fill="#1b1b1e"/><rect x="1264" y="727.4" width="456" height="30.5" fill="#0b54a3"/><path d="M1271.8999999999999,737.0 H1290.3 V746.2 H1281.7 V748.1 H1273.5 V746.2 H1271.8999999999999 Z" fill="#fff"/><rect x="1269.8" y="737.0" width="1.2" height="11.1" fill="#fff"/><circle cx="1277.2" cy="741.5" r="3.1" fill="#0e2c4c"/><circle cx="1277.2" cy="741.5" r="1.3" fill="#fff"/><circle cx="1285.3" cy="741.5" r="3.1" fill="#0e2c4c"/><circle cx="1285.3" cy="741.5" r="1.3" fill="#fff"/><rect x="1299.6" y="734.4" width="5.4" height="2.2" fill="#fff"/><rect x="1297.1" y="736.1" width="10.2" height="15.2" rx="0.9" fill="#fff"/><rect x="1299.0" y="738.1" width="6.4" height="5.2" fill="#0e2c4c"/><path d="M1311.8999999999999,736.3 L1308.3,744.6999999999999 L1310.6,744.1999999999999 L1310.1999999999998,751.0 L1314.6,742.0 L1312.1,742.5 Z" fill="#fff"/><circle cx="1704.8" cy="743.1999999999999" r="8" fill="#1ab4f5"/><rect x="1704.0" y="741.6999999999999" width="1.6" height="5.5" fill="#0b5d92"/><circle cx="1704.8" cy="739.5999999999999" r="0.95" fill="#0b5d92"/><polygon points="1294.0,913.2 1294.0,786.6 1712.0,786.6 1712.0,913.2" fill="#15396a"/><rect x="1294" y="821.2" width="418" height="1.6" fill="#5e86b3"/><rect x="1294" y="912.4000000000001" width="418" height="1.6" fill="#8a909a"/><polyline points="1294.0,786.6 1712.0,786.6" fill="none" stroke="#2a84ee" stroke-width="2.2" stroke-linejoin="round"/><rect x="1264" y="970.9" width="456" height="60.10000000000002" fill="#1b1b1e"/><rect x="1264" y="940.4" width="456" height="30.5" fill="#0b54a3"/><path d="M1271.8999999999999,950.0 H1290.3 V959.2 H1281.7 V961.1 H1273.5 V959.2 H1271.8999999999999 Z" fill="#fff"/><rect x="1269.8" y="950.0" width="1.2" height="11.1" fill="#fff"/><circle cx="1277.2" cy="954.5" r="3.1" fill="#0e2c4c"/><circle cx="1277.2" cy="954.5" r="1.3" fill="#fff"/><circle cx="1285.3" cy="954.5" r="3.1" fill="#0e2c4c"/><circle cx="1285.3" cy="954.5" r="1.3" fill="#fff"/><rect x="1299.6" y="947.4" width="5.4" height="2.2" fill="#fff"/><rect x="1297.1" y="949.1" width="10.2" height="15.2" rx="0.9" fill="#fff"/><rect x="1299.0" y="951.1" width="6.4" height="5.2" fill="#0e2c4c"/><path d="M1311.8999999999999,949.3 L1308.3,957.6999999999999 L1310.6,957.1999999999999 L1310.1999999999998,964.0 L1314.6,955.0 L1312.1,955.5 Z" fill="#fff"/><circle cx="1704.8" cy="956.1999999999999" r="8" fill="#1ab4f5"/><rect x="1704.0" y="954.6999999999999" width="1.6" height="5.5" fill="#0b5d92"/><circle cx="1704.8" cy="952.5999999999999" r="0.95" fill="#0b5d92"/><polygon points="1294.0,1031 1294.0,998.0 1712.0,998.0 1712.0,1031" fill="#15396a"/><rect x="1294" y="1024.5" width="418" height="1.6" fill="#5e86b3"/><polyline points="1294.0,998.0 1712.0,998.0" fill="none" stroke="#2a84ee" stroke-width="2.2" stroke-linejoin="round"/></svg>
<div style="position:absolute;left:0px;top:1031.4px;width:1728px;height:48.6px;background:#e3dbdf;"></div>
<svg style="position:absolute;left:0;top:0" width="1728" height="1080"><defs><linearGradient id="wg" x1="0" y1="0" x2="1" y2="1"><stop offset="0" stop-color="#3fc1f4"/><stop offset="1" stop-color="#1479d6"/></linearGradient><linearGradient id="eg" x1="0" y1="0" x2="1" y2="1"><stop offset="0" stop-color="#36c9a4"/><stop offset="1" stop-color="#1568c4"/></linearGradient></defs><rect x="29.8" y="1045" width="4.2" height="14" rx="2" fill="#4aa3d8"/><circle cx="31.9" cy="1061" r="3.4" fill="#1f7fc4"/><circle cx="31.9" cy="1061" r="1.2" fill="#cfe6f5"/><path d="M21,1049.5 L27,1049.5 M24.2,1047.5 L27,1049.5 L24.2,1051.5 M22,1053 L26.5,1050.5" fill="none" stroke="#6aa6d6" stroke-width="1.3"/><rect x="582.6" y="1043.6" width="11.4" height="11.4" fill="url(#wg)"/><rect x="595.2" y="1043.6" width="11.4" height="11.4" fill="url(#wg)"/><rect x="582.6" y="1056.1999999999998" width="11.4" height="11.4" fill="url(#wg)"/><rect x="595.2" y="1056.1999999999998" width="11.4" height="11.4" fill="url(#wg)"/><rect x="621.3" y="1041.7" width="219" height="29.4" rx="14.7" fill="#f6f2f3" stroke="#d6d0d2" stroke-width="1"/><circle cx="638" cy="1054.5" r="5.6" fill="none" stroke="#1a1a1a" stroke-width="1.6"/><path d="M642,1058.5 L646.3,1062.8" stroke="#1a1a1a" stroke-width="1.8"/><defs><clipPath id="cl"><path d="M788.5,1062 Q786,1054 795,1052 Q797,1045 806,1047 Q811,1041 820,1045 Q829,1043 832,1050 Q840,1053 838.5,1062 Q838,1068 830,1068 H797 Q788,1068 788.5,1062 Z"/></clipPath><linearGradient id="sky" x1="0" y1="0" x2="0" y2="1"><stop offset="0" stop-color="#4a3570"/><stop offset="0.6" stop-color="#a96a8a"/><stop offset="1" stop-color="#e0b0a0"/></linearGradient><linearGradient id="edg" x1="0" y1="0" x2="1" y2="0"><stop offset="0" stop-color="#1d8fd8"/><stop offset="1" stop-color="#45d36a"/></linearGradient></defs><g clip-path="url(#cl)"><rect x="786" y="1041" width="54" height="28" fill="url(#sky)"/><rect x="800" y="1048" width="9" height="12" fill="#e8e4ea"/><rect x="809" y="1052" width="16" height="8" fill="#9fb4c0"/><rect x="786" y="1060" width="54" height="4" fill="#3a2a2a"/><rect x="786" y="1064" width="54" height="5" fill="#5aa0a0"/></g><path d="M789,1061.8 H838" stroke="#e8d8b0" stroke-width="1.4" stroke-dasharray="2.2,1.8"/><rect x="860.5" y="1044.3" width="17.2" height="14.4" fill="#fafafa"/><rect x="855" y="1050.8" width="17.6" height="15.7" rx="1" fill="#1e1e1e"/><rect x="860.5" y="1050.8" width="12.1" height="10.2" fill="#bdbdbd"/><path d="M898.5,1056 A12.5,12.5 0 0 1 923.5,1055 Q923.5,1061 917,1061 Q909,1061 910,1055 Q903,1056 898.5,1056 Z" fill="url(#edg)"/><path d="M898.5,1056 Q903,1052 910,1055 Q909,1061 917,1061 Q921,1061 921.5,1063 Q916,1068.5 909,1068 Q899,1066 898.5,1056 Z" fill="#1560b8"/><circle cx="905" cy="1058.5" r="2.3" fill="#8a8a8a"/><path d="M900.8,1066 Q901,1061.5 905,1061.5 Q909,1061.5 909.2,1066 Z" fill="#8a8a8a"/><rect x="908.2" y="1072.6" width="6.5" height="2.3" rx="1.1" fill="#7a7a7a"/><path d="M943.7,1045 H951.5 L954,1047 H967.5 V1067 H943.7 Z" fill="#e6a820"/><rect x="943.7" y="1048" width="23.8" height="19" fill="#fbd04a"/><rect x="943.7" y="1058" width="23.8" height="9" fill="#f3bd2e"/><path d="M947.4,1066.6 V1062 Q947.4,1059.4 950,1059.4 H961.7 Q964.3,1059.4 964.3,1062 V1066.6 Z" fill="#1a73d1"/><rect x="993.5" y="1044" width="12" height="3" rx="1" fill="#4fa8e8"/><rect x="987.8" y="1046.5" width="23.6" height="21.5" rx="2.5" fill="#1a5cb0"/><rect x="995" y="1052" width="4.4" height="4.4" fill="#e8532a"/><rect x="1000.2" y="1052" width="4.4" height="4.4" fill="#7cb82a"/><rect x="995" y="1057.2" width="4.4" height="4.4" fill="#1ba1e2"/><rect x="1000.2" y="1057.2" width="4.4" height="4.4" fill="#f2b81c"/><rect x="1032.9" y="1043.6" width="24.3" height="24.3" rx="3" fill="#0d0d0d"/><polygon points="1055.00,1055.80 1047.90,1056.58 1053.66,1060.80 1047.12,1057.92 1050.00,1064.46 1045.78,1058.70 1045.00,1065.80 1044.22,1058.70 1040.00,1064.46 1042.88,1057.92 1036.34,1060.80 1042.10,1056.58 1035.00,1055.80 1042.10,1055.02 1036.34,1050.80 1042.88,1053.68 1040.00,1047.14 1044.22,1052.90 1045.00,1045.80 1045.78,1052.90 1050.00,1047.14 1047.12,1053.68 1053.66,1050.80 1047.90,1055.02" fill="#f5d23a"/><circle cx="1089" cy="1055.5" r="11.5" fill="#1b3560"/><path d="M1077.6,1057 Q1080,1066 1089,1067 Q1098,1067 1100.5,1057 Z" fill="#2f6aa0" opacity="0.8"/><circle cx="1093.3" cy="1052.5" r="4" fill="#fff"/><circle cx="1093.3" cy="1052.5" r="2.2" fill="#1b3560"/><path d="M1077.5,1057.5 L1086,1061 L1092,1056" stroke="#fff" stroke-width="2.4" fill="none"/><circle cx="1085.5" cy="1060.5" r="3.2" fill="#fff"/><circle cx="1085.5" cy="1060.5" r="1.5" fill="#1b3560"/><rect x="1085.2" y="1072" width="7" height="2.5" rx="1.2" fill="#7a7a7a"/><rect x="1115.6" y="1037.5" width="35" height="38.5" rx="4" fill="#f2eaeb" stroke="#e2d8da" stroke-width="0.8"/><rect x="1122.5" y="1046" width="22.5" height="18" fill="#f4f4f4" stroke="#8a9498" stroke-width="1"/><rect x="1124.5" y="1048" width="8.5" height="14" fill="#3a8a7a"/><rect x="1134.5" y="1049" width="3" height="1" fill="#888"/><rect x="1134.5" y="1052" width="3" height="1" fill="#888"/><rect x="1140" y="1049" width="2.5" height="6" fill="#6a8a80"/><rect x="1125.3" y="1072" width="16.3" height="3" rx="1.5" fill="#1a6fd0"/><path d="M1463.3,1059 L1468.3,1054 L1473.3,1059" fill="none" stroke="#222" stroke-width="1.4"/><path d="M1493.5,1061 Q1492,1055 1497,1053.5 Q1500,1049 1505,1052 Q1509,1052.5 1508.5,1057 Q1508,1061 1504,1061 Z" fill="#bdb8ba" stroke="#333" stroke-width="1.2"/><path d="M1493.5,1048.5 L1508,1062.5" stroke="#333" stroke-width="1.3"/><rect x="1569.5" y="1048" width="12.5" height="10" fill="none" stroke="#333" stroke-width="1.3"/><path d="M1573,1061.5 H1579 M1576,1058 V1061.5" stroke="#333" stroke-width="1.2"/><rect x="1582" y="1047.5" width="3.5" height="6" rx="1.5" fill="none" stroke="#333" stroke-width="1.1"/><path d="M1583.7,1053.5 V1062.5 H1580" fill="none" stroke="#333" stroke-width="1"/><path d="M1594.2,1053 H1597 L1601,1049.5 V1062.5 L1597,1059 H1594.2 Z" fill="none" stroke="#333" stroke-width="1.2"/><path d="M1603,1053.5 Q1605,1056 1603,1058.5 M1605.5,1051.5 Q1609,1056 1605.5,1060.5 M1608,1049.5 Q1613,1056 1608,1062.5" fill="none" stroke="#333" stroke-width="1.1"/><rect x="1618.5" y="1051" width="13" height="9" rx="1" fill="#333"/><rect x="1631.5" y="1053.5" width="1.8" height="4" fill="#333"/><path d="M1621,1047 L1618.7,1052 L1621.5,1052 L1620,1056" fill="none" stroke="#333" stroke-width="1.1"/></svg>
<div class="t" style="left:210.20px;transform-origin:0 0;top:3.82px;font-size:13.8px;font-weight:400;color:#fff;transform:scaleX(1.0096);-webkit-text-stroke:0.45px #fff;">Last known status before crash</div>
<div class="t" style="left:169.20px;transform-origin:0 0;top:59.58px;font-size:22px;font-weight:700;color:#ececec;transform:scaleX(0.9213);">Linpack</div>
<div class="t" style="left:123.00px;transform-origin:0 0;top:103.92px;font-size:21px;font-weight:700;color:#ececec;transform:scaleX(1.0153);">No errors detected</div>
<div class="t" style="left:431.50px;transform-origin:0 0;top:56.85px;font-size:21.2px;font-weight:700;color:#ececec;transform:scaleX(0.9822);">00:00:01</div>
<div class="t" style="left:431.50px;transform-origin:0 0;top:100.95px;font-size:21.2px;font-weight:700;color:#ececec;transform:scaleX(0.9869);">01:00:00</div>
<div class="t" style="left:112.80px;transform-origin:0 0;top:177.69px;font-size:17.5px;font-weight:400;color:#f0f0f0;transform:scaleX(1.0611);-webkit-text-stroke:0.3px #f0f0f0;">v2021</div>
<div class="t" style="left:206.30px;transform-origin:0 0;top:177.69px;font-size:17.5px;font-weight:400;color:#f0f0f0;transform:scaleX(1.0736);-webkit-text-stroke:0.3px #f0f0f0;">16 thread(s)</div>
<div class="t" style="left:349.90px;transform-origin:0 0;top:177.69px;font-size:17.5px;font-weight:400;color:#f0f0f0;transform:scaleX(1.0393);-webkit-text-stroke:0.3px #f0f0f0;">2048 MB</div>
<div class="t" style="left:46.80px;transform-origin:0 0;top:266.95px;font-size:14px;font-weight:400;color:#e4e4e4;transform:scaleX(1.0202);-webkit-text-stroke:0.25px #e4e4e4;">00:00:00</div>
<div class="t" style="left:113.40px;transform-origin:0 0;top:266.95px;font-size:14px;font-weight:400;color:#e4e4e4;transform:scaleX(1.0587);-webkit-text-stroke:0.25px #e4e4e4;">Test schedule started at 2025-11-27 19:59:09</div>
<div class="t" style="left:46.80px;transform-origin:0 0;top:295.40px;font-size:14px;font-weight:400;color:#e4e4e4;transform:scaleX(1.0202);-webkit-text-stroke:0.25px #e4e4e4;">00:00:00</div>
<div class="t" style="left:113.40px;transform-origin:0 0;top:295.40px;font-size:14px;font-weight:400;color:#e4e4e4;transform:scaleX(1.0335);-webkit-text-stroke:0.25px #e4e4e4;">Linpack - Initializing (Duration : 01:00:00)</div>
<div class="t" style="left:46.80px;transform-origin:0 0;top:323.85px;font-size:14px;font-weight:400;color:#e4e4e4;transform:scaleX(1.0202);-webkit-text-stroke:0.25px #e4e4e4;">00:00:00</div>
<div class="t" style="left:113.40px;transform-origin:0 0;top:323.85px;font-size:14px;font-weight:400;color:#e4e4e4;transform:scaleX(1.0305);-webkit-text-stroke:0.25px #e4e4e4;">Linpack - Started (Duration : 01:00:00)</div>
<div class="t" style="left:684.20px;transform-origin:0 0;top:51.15px;font-size:14px;font-weight:400;color:#a4a4a6;transform:scaleX(1.0442);">Filter</div>
<div class="t" style="left:693.90px;transform-origin:0 0;top:95.20px;font-size:15px;font-weight:400;color:#fff;">Name</div>
<div class="t" style="right:829.60px;transform-origin:100% 0;top:95.20px;font-size:15px;font-weight:400;color:#fff;transform:scaleX(1.0412);">Value</div>
<div class="t" style="right:717.40px;transform-origin:100% 0;top:95.20px;font-size:15px;font-weight:400;color:#fff;transform:scaleX(1.0632);">Min</div>
<div class="t" style="right:607.20px;transform-origin:100% 0;top:95.20px;font-size:15px;font-weight:400;color:#fff;transform:scaleX(0.9969);">Avg</div>
<div class="t" style="right:493.90px;transform-origin:100% 0;top:95.20px;font-size:15px;font-weight:400;color:#fff;transform:scaleX(1.0337);">Max</div>
<div class="t" style="left:638.30px;transform-origin:0 0;top:121.34px;font-size:14.6px;font-weight:400;color:#ececec;transform:scaleX(0.9281);-webkit-text-stroke:0.15px #ececec;">CPU Core Power (SVI3...</div>
<div class="t" style="right:827.80px;transform-origin:100% 0;top:121.34px;font-size:14.6px;font-weight:400;color:#ececec;transform:scaleX(0.9836);-webkit-text-stroke:0.15px #ececec;">2,08</div>
<div class="t" style="right:716.00px;transform-origin:100% 0;top:121.34px;font-size:14.6px;font-weight:400;color:#ececec;transform:scaleX(0.9836);-webkit-text-stroke:0.15px #ececec;">1,35</div>
<div class="t" style="right:605.00px;transform-origin:100% 0;top:121.34px;font-size:14.6px;font-weight:400;color:#ececec;transform:scaleX(0.9836);-webkit-text-stroke:0.15px #ececec;">1,81</div>
<div class="t" style="right:493.70px;transform-origin:100% 0;top:121.34px;font-size:14.6px;font-weight:400;color:#ececec;transform:scaleX(0.9836);-webkit-text-stroke:0.15px #ececec;">6,34</div>
<div class="t" style="left:638.30px;transform-origin:0 0;top:147.67px;font-size:14.6px;font-weight:400;color:#ececec;transform:scaleX(0.9145);-webkit-text-stroke:0.15px #ececec;">CPU SoC Power (SVI3 ...</div>
<div class="t" style="right:827.80px;transform-origin:100% 0;top:147.67px;font-size:14.6px;font-weight:400;color:#ececec;transform:scaleX(0.9836);-webkit-text-stroke:0.15px #ececec;">2,26</div>
<div class="t" style="right:716.00px;transform-origin:100% 0;top:147.67px;font-size:14.6px;font-weight:400;color:#ececec;transform:scaleX(0.9836);-webkit-text-stroke:0.15px #ececec;">2,07</div>
<div class="t" style="right:605.00px;transform-origin:100% 0;top:147.67px;font-size:14.6px;font-weight:400;color:#ececec;transform:scaleX(0.9836);-webkit-text-stroke:0.15px #ececec;">2,19</div>
<div class="t" style="right:493.70px;transform-origin:100% 0;top:147.67px;font-size:14.6px;font-weight:400;color:#ececec;transform:scaleX(0.9836);-webkit-text-stroke:0.15px #ececec;">2,96</div>
<div class="t" style="left:638.30px;transform-origin:0 0;top:174.00px;font-size:14.6px;font-weight:400;color:#ececec;transform:scaleX(0.9302);-webkit-text-stroke:0.15px #ececec;">Core+SoC+SR Power (...</div>
<div class="t" style="right:827.80px;transform-origin:100% 0;top:174.00px;font-size:14.6px;font-weight:400;color:#ececec;transform:scaleX(0.9836);-webkit-text-stroke:0.15px #ececec;">4,78</div>
<div class="t" style="right:716.00px;transform-origin:100% 0;top:174.00px;font-size:14.6px;font-weight:400;color:#ececec;transform:scaleX(0.9836);-webkit-text-stroke:0.15px #ececec;">3,90</div>
<div class="t" style="right:605.00px;transform-origin:100% 0;top:174.00px;font-size:14.6px;font-weight:400;color:#ececec;transform:scaleX(0.9836);-webkit-text-stroke:0.15px #ececec;">4,43</div>
<div class="t" style="right:493.70px;transform-origin:100% 0;top:174.00px;font-size:14.6px;font-weight:400;color:#ececec;transform:scaleX(0.9836);-webkit-text-stroke:0.15px #ececec;">9,77</div>
<div class="t" style="left:638.30px;transform-origin:0 0;top:200.33px;font-size:14.6px;font-weight:400;color:#ececec;transform:scaleX(0.8806);-webkit-text-stroke:0.15px #ececec;">CPU PPT</div>
<div class="t" style="right:827.80px;transform-origin:100% 0;top:200.33px;font-size:14.6px;font-weight:400;color:#ececec;transform:scaleX(0.9836);-webkit-text-stroke:0.15px #ececec;">6,15</div>
<div class="t" style="right:716.00px;transform-origin:100% 0;top:200.33px;font-size:14.6px;font-weight:400;color:#ececec;transform:scaleX(0.9836);-webkit-text-stroke:0.15px #ececec;">5,43</div>
<div class="t" style="right:605.00px;transform-origin:100% 0;top:200.33px;font-size:14.6px;font-weight:400;color:#ececec;transform:scaleX(0.9836);-webkit-text-stroke:0.15px #ececec;">5,93</div>
<div class="t" style="right:493.70px;transform-origin:100% 0;top:200.33px;font-size:14.6px;font-weight:400;color:#ececec;transform:scaleX(0.9836);-webkit-text-stroke:0.15px #ececec;">9,07</div>
<div class="t" style="left:638.30px;transform-origin:0 0;top:226.66px;font-size:14.6px;font-weight:400;color:#ececec;transform:scaleX(0.9091);-webkit-text-stroke:0.15px #ececec;">APU STAPM</div>
<div class="t" style="right:827.80px;transform-origin:100% 0;top:226.66px;font-size:14.6px;font-weight:400;color:#ececec;transform:scaleX(0.9836);-webkit-text-stroke:0.15px #ececec;">19,35</div>
<div class="t" style="right:716.00px;transform-origin:100% 0;top:226.66px;font-size:14.6px;font-weight:400;color:#ececec;transform:scaleX(0.9836);-webkit-text-stroke:0.15px #ececec;">19,35</div>
<div class="t" style="right:605.00px;transform-origin:100% 0;top:226.66px;font-size:14.6px;font-weight:400;color:#ececec;transform:scaleX(0.9836);-webkit-text-stroke:0.15px #ececec;">21,73</div>
<div class="t" style="right:493.70px;transform-origin:100% 0;top:226.66px;font-size:14.6px;font-weight:400;color:#ececec;transform:scaleX(0.9836);-webkit-text-stroke:0.15px #ececec;">24,48</div>
<div class="t" style="left:638.30px;transform-origin:0 0;top:252.99px;font-size:14.6px;font-weight:400;color:#ececec;transform:scaleX(0.9302);-webkit-text-stroke:0.15px #ececec;">CPU Core Current (SVI...</div>
<div class="t" style="right:827.80px;transform-origin:100% 0;top:252.99px;font-size:14.6px;font-weight:400;color:#ececec;transform:scaleX(0.9836);-webkit-text-stroke:0.15px #ececec;">2,41</div>
<div class="t" style="right:716.00px;transform-origin:100% 0;top:252.99px;font-size:14.6px;font-weight:400;color:#ececec;transform:scaleX(0.9836);-webkit-text-stroke:0.15px #ececec;">1,82</div>
<div class="t" style="right:605.00px;transform-origin:100% 0;top:252.99px;font-size:14.6px;font-weight:400;color:#ececec;transform:scaleX(0.9836);-webkit-text-stroke:0.15px #ececec;">2,17</div>
<div class="t" style="right:493.70px;transform-origin:100% 0;top:252.99px;font-size:14.6px;font-weight:400;color:#ececec;transform:scaleX(0.9836);-webkit-text-stroke:0.15px #ececec;">5,60</div>
<div class="t" style="left:638.30px;transform-origin:0 0;top:279.32px;font-size:14.6px;font-weight:400;color:#ececec;transform:scaleX(0.9345);-webkit-text-stroke:0.15px #ececec;">SoC Current (SVI3 TFN)</div>
<div class="t" style="right:827.80px;transform-origin:100% 0;top:279.32px;font-size:14.6px;font-weight:400;color:#ececec;transform:scaleX(0.9836);-webkit-text-stroke:0.15px #ececec;">2,26</div>
<div class="t" style="right:716.00px;transform-origin:100% 0;top:279.32px;font-size:14.6px;font-weight:400;color:#ececec;transform:scaleX(0.9836);-webkit-text-stroke:0.15px #ececec;">2,09</div>
<div class="t" style="right:605.00px;transform-origin:100% 0;top:279.32px;font-size:14.6px;font-weight:400;color:#ececec;transform:scaleX(0.9836);-webkit-text-stroke:0.15px #ececec;">2,20</div>
<div class="t" style="right:493.70px;transform-origin:100% 0;top:279.32px;font-size:14.6px;font-weight:400;color:#ececec;transform:scaleX(0.9836);-webkit-text-stroke:0.15px #ececec;">2,90</div>
<div class="t" style="left:638.30px;transform-origin:0 0;top:305.65px;font-size:14.6px;font-weight:400;color:#ececec;transform:scaleX(0.8729);-webkit-text-stroke:0.15px #ececec;">CPU TDC</div>
<div class="t" style="right:827.80px;transform-origin:100% 0;top:305.65px;font-size:14.6px;font-weight:400;color:#ececec;transform:scaleX(0.9836);-webkit-text-stroke:0.15px #ececec;">2,15</div>
<div class="t" style="right:716.00px;transform-origin:100% 0;top:305.65px;font-size:14.6px;font-weight:400;color:#ececec;transform:scaleX(0.9836);-webkit-text-stroke:0.15px #ececec;">1,83</div>
<div class="t" style="right:605.00px;transform-origin:100% 0;top:305.65px;font-size:14.6px;font-weight:400;color:#ececec;transform:scaleX(0.9836);-webkit-text-stroke:0.15px #ececec;">2,17</div>
<div class="t" style="right:493.70px;transform-origin:100% 0;top:305.65px;font-size:14.6px;font-weight:400;color:#ececec;transform:scaleX(0.9836);-webkit-text-stroke:0.15px #ececec;">5,59</div>
<div class="t" style="left:638.30px;transform-origin:0 0;top:331.98px;font-size:14.6px;font-weight:400;color:#ececec;transform:scaleX(0.8601);-webkit-text-stroke:0.15px #ececec;">CPU EDC</div>
<div class="t" style="right:827.80px;transform-origin:100% 0;top:331.98px;font-size:14.6px;font-weight:400;color:#ececec;transform:scaleX(0.9836);-webkit-text-stroke:0.15px #ececec;">41,32</div>
<div class="t" style="right:716.00px;transform-origin:100% 0;top:331.98px;font-size:14.6px;font-weight:400;color:#ececec;transform:scaleX(0.9836);-webkit-text-stroke:0.15px #ececec;">35,78</div>
<div class="t" style="right:605.00px;transform-origin:100% 0;top:331.98px;font-size:14.6px;font-weight:400;color:#ececec;transform:scaleX(0.9836);-webkit-text-stroke:0.15px #ececec;">39,00</div>
<div class="t" style="right:493.70px;transform-origin:100% 0;top:331.98px;font-size:14.6px;font-weight:400;color:#ececec;transform:scaleX(0.9836);-webkit-text-stroke:0.15px #ececec;">56,15</div>
<div class="t" style="left:638.30px;transform-origin:0 0;top:358.31px;font-size:14.6px;font-weight:400;color:#ececec;transform:scaleX(0.9325);-webkit-text-stroke:0.15px #ececec;">SR Current (SVI3 TFN)</div>
<div class="t" style="right:827.80px;transform-origin:100% 0;top:358.31px;font-size:14.6px;font-weight:400;color:#ececec;transform:scaleX(0.9836);-webkit-text-stroke:0.15px #ececec;">0,43</div>
<div class="t" style="right:716.00px;transform-origin:100% 0;top:358.31px;font-size:14.6px;font-weight:400;color:#ececec;transform:scaleX(0.9836);-webkit-text-stroke:0.15px #ececec;">0,42</div>
<div class="t" style="right:605.00px;transform-origin:100% 0;top:358.31px;font-size:14.6px;font-weight:400;color:#ececec;transform:scaleX(0.9836);-webkit-text-stroke:0.15px #ececec;">0,43</div>
<div class="t" style="right:493.70px;transform-origin:100% 0;top:358.31px;font-size:14.6px;font-weight:400;color:#ececec;transform:scaleX(0.9836);-webkit-text-stroke:0.15px #ececec;">0,45</div>
<div class="t" style="left:638.30px;transform-origin:0 0;top:384.64px;font-size:14.6px;font-weight:400;color:#ececec;transform:scaleX(0.9780);-webkit-text-stroke:0.15px #ececec;">Core 0 Clock (perf #3)</div>
<div class="t" style="right:827.80px;transform-origin:100% 0;top:384.64px;font-size:14.6px;font-weight:400;color:#ececec;transform:scaleX(0.9836);-webkit-text-stroke:0.15px #ececec;">3942,89</div>
<div class="t" style="right:716.00px;transform-origin:100% 0;top:384.64px;font-size:14.6px;font-weight:400;color:#ececec;transform:scaleX(0.9836);-webkit-text-stroke:0.15px #ececec;">2253,08</div>
<div class="t" style="right:605.00px;transform-origin:100% 0;top:384.64px;font-size:14.6px;font-weight:400;color:#ececec;transform:scaleX(0.9836);-webkit-text-stroke:0.15px #ececec;">2568,37</div>
<div class="t" style="right:493.70px;transform-origin:100% 0;top:384.64px;font-size:14.6px;font-weight:400;color:#ececec;transform:scaleX(0.9836);-webkit-text-stroke:0.15px #ececec;">3942,89</div>
<div class="t" style="left:638.30px;transform-origin:0 0;top:410.97px;font-size:14.6px;font-weight:400;color:#ececec;transform:scaleX(0.9780);-webkit-text-stroke:0.15px #ececec;">Core 1 Clock (perf #1)</div>
<div class="t" style="right:827.80px;transform-origin:100% 0;top:410.97px;font-size:14.6px;font-weight:400;color:#ececec;transform:scaleX(0.9836);-webkit-text-stroke:0.15px #ececec;">3942,89</div>
<div class="t" style="right:716.00px;transform-origin:100% 0;top:410.97px;font-size:14.6px;font-weight:400;color:#ececec;transform:scaleX(0.9836);-webkit-text-stroke:0.15px #ececec;">1440,26</div>
<div class="t" style="right:605.00px;transform-origin:100% 0;top:410.97px;font-size:14.6px;font-weight:400;color:#ececec;transform:scaleX(0.9836);-webkit-text-stroke:0.15px #ececec;">2942,91</div>
<div class="t" style="right:493.70px;transform-origin:100% 0;top:410.97px;font-size:14.6px;font-weight:400;color:#ececec;transform:scaleX(0.9836);-webkit-text-stroke:0.15px #ececec;">3942,89</div>
<div class="t" style="left:638.30px;transform-origin:0 0;top:437.30px;font-size:14.6px;font-weight:400;color:#ececec;transform:scaleX(0.9780);-webkit-text-stroke:0.15px #ececec;">Core 2 Clock (perf #5)</div>
<div class="t" style="right:827.80px;transform-origin:100% 0;top:437.30px;font-size:14.6px;font-weight:400;color:#ececec;transform:scaleX(0.9836);-webkit-text-stroke:0.15px #ececec;">3942,89</div>
<div class="t" style="right:716.00px;transform-origin:100% 0;top:437.30px;font-size:14.6px;font-weight:400;color:#ececec;transform:scaleX(0.9836);-webkit-text-stroke:0.15px #ececec;">2253,08</div>
<div class="t" style="right:605.00px;transform-origin:100% 0;top:437.30px;font-size:14.6px;font-weight:400;color:#ececec;transform:scaleX(0.9836);-webkit-text-stroke:0.15px #ececec;">2760,24</div>
<div class="t" style="right:493.70px;transform-origin:100% 0;top:437.30px;font-size:14.6px;font-weight:400;color:#ececec;transform:scaleX(0.9836);-webkit-text-stroke:0.15px #ececec;">3942,89</div>
<div class="t" style="left:638.30px;transform-origin:0 0;top:463.63px;font-size:14.6px;font-weight:400;color:#ececec;transform:scaleX(0.9780);-webkit-text-stroke:0.15px #ececec;">Core 3 Clock (perf #4)</div>
<div class="t" style="right:827.80px;transform-origin:100% 0;top:463.63px;font-size:14.6px;font-weight:400;color:#ececec;transform:scaleX(0.9836);-webkit-text-stroke:0.15px #ececec;">2253,08</div>
<div class="t" style="right:716.00px;transform-origin:100% 0;top:463.63px;font-size:14.6px;font-weight:400;color:#ececec;transform:scaleX(0.9836);-webkit-text-stroke:0.15px #ececec;">2253,08</div>
<div class="t" style="right:605.00px;transform-origin:100% 0;top:463.63px;font-size:14.6px;font-weight:400;color:#ececec;transform:scaleX(0.9836);-webkit-text-stroke:0.15px #ececec;">2438,32</div>
<div class="t" style="right:493.70px;transform-origin:100% 0;top:463.63px;font-size:14.6px;font-weight:400;color:#ececec;transform:scaleX(0.9836);-webkit-text-stroke:0.15px #ececec;">3942,89</div>
<div class="t" style="left:638.30px;transform-origin:0 0;top:489.96px;font-size:14.6px;font-weight:400;color:#ececec;transform:scaleX(0.9780);-webkit-text-stroke:0.15px #ececec;">Core 4 Clock (perf #6)</div>
<div class="t" style="right:827.80px;transform-origin:100% 0;top:489.96px;font-size:14.6px;font-weight:400;color:#ececec;transform:scaleX(0.9836);-webkit-text-stroke:0.15px #ececec;">2253,08</div>
<div class="t" style="right:716.00px;transform-origin:100% 0;top:489.96px;font-size:14.6px;font-weight:400;color:#ececec;transform:scaleX(0.9836);-webkit-text-stroke:0.15px #ececec;">2253,08</div>
<div class="t" style="right:605.00px;transform-origin:100% 0;top:489.96px;font-size:14.6px;font-weight:400;color:#ececec;transform:scaleX(0.9836);-webkit-text-stroke:0.15px #ececec;">2454,36</div>
<div class="t" style="right:493.70px;transform-origin:100% 0;top:489.96px;font-size:14.6px;font-weight:400;color:#ececec;transform:scaleX(0.9836);-webkit-text-stroke:0.15px #ececec;">3942,89</div>
<div class="t" style="left:638.30px;transform-origin:0 0;top:516.29px;font-size:14.6px;font-weight:400;color:#ececec;transform:scaleX(0.9780);-webkit-text-stroke:0.15px #ececec;">Core 5 Clock (perf #1)</div>
<div class="t" style="right:827.80px;transform-origin:100% 0;top:516.29px;font-size:14.6px;font-weight:400;color:#ececec;transform:scaleX(0.9836);-webkit-text-stroke:0.15px #ececec;">2253,08</div>
<div class="t" style="right:716.00px;transform-origin:100% 0;top:516.29px;font-size:14.6px;font-weight:400;color:#ececec;transform:scaleX(0.9836);-webkit-text-stroke:0.15px #ececec;">2253,08</div>
<div class="t" style="right:605.00px;transform-origin:100% 0;top:516.29px;font-size:14.6px;font-weight:400;color:#ececec;transform:scaleX(0.9836);-webkit-text-stroke:0.15px #ececec;">2593,18</div>
<div class="t" style="right:493.70px;transform-origin:100% 0;top:516.29px;font-size:14.6px;font-weight:400;color:#ececec;transform:scaleX(0.9836);-webkit-text-stroke:0.15px #ececec;">3942,89</div>
<div class="t" style="left:638.30px;transform-origin:0 0;top:542.62px;font-size:14.6px;font-weight:400;color:#ececec;transform:scaleX(0.9780);-webkit-text-stroke:0.15px #ececec;">Core 6 Clock (perf #7)</div>
<div class="t" style="right:827.80px;transform-origin:100% 0;top:542.62px;font-size:14.6px;font-weight:400;color:#ececec;transform:scaleX(0.9836);-webkit-text-stroke:0.15px #ececec;">2253,08</div>
<div class="t" style="right:716.00px;transform-origin:100% 0;top:542.62px;font-size:14.6px;font-weight:400;color:#ececec;transform:scaleX(0.9836);-webkit-text-stroke:0.15px #ececec;">2253,08</div>
<div class="t" style="right:605.00px;transform-origin:100% 0;top:542.62px;font-size:14.6px;font-weight:400;color:#ececec;transform:scaleX(0.9836);-webkit-text-stroke:0.15px #ececec;">2491,79</div>
<div class="t" style="right:493.70px;transform-origin:100% 0;top:542.62px;font-size:14.6px;font-weight:400;color:#ececec;transform:scaleX(0.9836);-webkit-text-stroke:0.15px #ececec;">3942,89</div>
<div class="t" style="left:638.30px;transform-origin:0 0;top:568.95px;font-size:14.6px;font-weight:400;color:#ececec;transform:scaleX(0.9780);-webkit-text-stroke:0.15px #ececec;">Core 7 Clock (perf #2)</div>
<div class="t" style="right:827.80px;transform-origin:100% 0;top:568.95px;font-size:14.6px;font-weight:400;color:#ececec;transform:scaleX(0.9836);-webkit-text-stroke:0.15px #ececec;">2253,08</div>
<div class="t" style="right:716.00px;transform-origin:100% 0;top:568.95px;font-size:14.6px;font-weight:400;color:#ececec;transform:scaleX(0.9836);-webkit-text-stroke:0.15px #ececec;">1440,26</div>
<div class="t" style="right:605.00px;transform-origin:100% 0;top:568.95px;font-size:14.6px;font-weight:400;color:#ececec;transform:scaleX(0.9836);-webkit-text-stroke:0.15px #ececec;">2441,74</div>
<div class="t" style="right:493.70px;transform-origin:100% 0;top:568.95px;font-size:14.6px;font-weight:400;color:#ececec;transform:scaleX(0.9836);-webkit-text-stroke:0.15px #ececec;">3942,89</div>
<div class="t" style="left:638.30px;transform-origin:0 0;top:595.28px;font-size:14.6px;font-weight:400;color:#ececec;transform:scaleX(0.9512);-webkit-text-stroke:0.15px #ececec;">Bus Clock</div>
<div class="t" style="right:827.80px;transform-origin:100% 0;top:595.28px;font-size:14.6px;font-weight:400;color:#ececec;transform:scaleX(0.9836);-webkit-text-stroke:0.15px #ececec;">99,82</div>
<div class="t" style="right:716.00px;transform-origin:100% 0;top:595.28px;font-size:14.6px;font-weight:400;color:#ececec;transform:scaleX(0.9836);-webkit-text-stroke:0.15px #ececec;">99,82</div>
<div class="t" style="right:605.00px;transform-origin:100% 0;top:595.28px;font-size:14.6px;font-weight:400;color:#ececec;transform:scaleX(0.9836);-webkit-text-stroke:0.15px #ececec;">99,82</div>
<div class="t" style="right:493.70px;transform-origin:100% 0;top:595.28px;font-size:14.6px;font-weight:400;color:#ececec;transform:scaleX(0.9836);-webkit-text-stroke:0.15px #ececec;">99,82</div>
<div class="t" style="left:638.30px;transform-origin:0 0;top:621.61px;font-size:14.6px;font-weight:400;color:#ececec;transform:scaleX(0.9754);-webkit-text-stroke:0.15px #ececec;">Core 0 T0 Effective Cl...</div>
<div class="t" style="right:827.80px;transform-origin:100% 0;top:621.61px;font-size:14.6px;font-weight:400;color:#ececec;transform:scaleX(0.9836);-webkit-text-stroke:0.15px #ececec;">1507,03</div>
<div class="t" style="right:716.00px;transform-origin:100% 0;top:621.61px;font-size:14.6px;font-weight:400;color:#ececec;transform:scaleX(0.9836);-webkit-text-stroke:0.15px #ececec;">491,25</div>
<div class="t" style="right:605.00px;transform-origin:100% 0;top:621.61px;font-size:14.6px;font-weight:400;color:#ececec;transform:scaleX(0.9836);-webkit-text-stroke:0.15px #ececec;">1395,70</div>
<div class="t" style="right:493.70px;transform-origin:100% 0;top:621.61px;font-size:14.6px;font-weight:400;color:#ececec;transform:scaleX(0.9836);-webkit-text-stroke:0.15px #ececec;">1810,86</div>
<div class="t" style="left:638.30px;transform-origin:0 0;top:647.94px;font-size:14.6px;font-weight:400;color:#ececec;transform:scaleX(0.9754);-webkit-text-stroke:0.15px #ececec;">Core 0 T1 Effective Cl...</div>
<div class="t" style="right:827.80px;transform-origin:100% 0;top:647.94px;font-size:14.6px;font-weight:400;color:#ececec;transform:scaleX(0.9836);-webkit-text-stroke:0.15px #ececec;">23,34</div>
<div class="t" style="right:716.00px;transform-origin:100% 0;top:647.94px;font-size:14.6px;font-weight:400;color:#ececec;transform:scaleX(0.9836);-webkit-text-stroke:0.15px #ececec;">7,57</div>
<div class="t" style="right:605.00px;transform-origin:100% 0;top:647.94px;font-size:14.6px;font-weight:400;color:#ececec;transform:scaleX(0.9836);-webkit-text-stroke:0.15px #ececec;">42,38</div>
<div class="t" style="right:493.70px;transform-origin:100% 0;top:647.94px;font-size:14.6px;font-weight:400;color:#ececec;transform:scaleX(0.9836);-webkit-text-stroke:0.15px #ececec;">129,57</div>
<div class="t" style="left:638.30px;transform-origin:0 0;top:674.27px;font-size:14.6px;font-weight:400;color:#ececec;transform:scaleX(0.9754);-webkit-text-stroke:0.15px #ececec;">Core 1 T0 Effective Cl...</div>
<div class="t" style="right:827.80px;transform-origin:100% 0;top:674.27px;font-size:14.6px;font-weight:400;color:#ececec;transform:scaleX(0.9836);-webkit-text-stroke:0.15px #ececec;">305,74</div>
<div class="t" style="right:716.00px;transform-origin:100% 0;top:674.27px;font-size:14.6px;font-weight:400;color:#ececec;transform:scaleX(0.9836);-webkit-text-stroke:0.15px #ececec;">167,50</div>
<div class="t" style="right:605.00px;transform-origin:100% 0;top:674.27px;font-size:14.6px;font-weight:400;color:#ececec;transform:scaleX(0.9836);-webkit-text-stroke:0.15px #ececec;">240,26</div>
<div class="t" style="right:493.70px;transform-origin:100% 0;top:674.27px;font-size:14.6px;font-weight:400;color:#ececec;transform:scaleX(0.9836);-webkit-text-stroke:0.15px #ececec;">589,87</div>
<div class="t" style="left:638.30px;transform-origin:0 0;top:700.60px;font-size:14.6px;font-weight:400;color:#ececec;transform:scaleX(0.9754);-webkit-text-stroke:0.15px #ececec;">Core 1 T1 Effective Cl...</div>
<div class="t" style="right:827.80px;transform-origin:100% 0;top:700.60px;font-size:14.6px;font-weight:400;color:#ececec;transform:scaleX(0.9836);-webkit-text-stroke:0.15px #ececec;">125,33</div>
<div class="t" style="right:716.00px;transform-origin:100% 0;top:700.60px;font-size:14.6px;font-weight:400;color:#ececec;transform:scaleX(0.9836);-webkit-text-stroke:0.15px #ececec;">101,06</div>
<div class="t" style="right:605.00px;transform-origin:100% 0;top:700.60px;font-size:14.6px;font-weight:400;color:#ececec;transform:scaleX(0.9836);-webkit-text-stroke:0.15px #ececec;">150,95</div>
<div class="t" style="right:493.70px;transform-origin:100% 0;top:700.60px;font-size:14.6px;font-weight:400;color:#ececec;transform:scaleX(0.9836);-webkit-text-stroke:0.15px #ececec;">438,24</div>
<div class="t" style="left:638.30px;transform-origin:0 0;top:726.93px;font-size:14.6px;font-weight:400;color:#ececec;transform:scaleX(0.9754);-webkit-text-stroke:0.15px #ececec;">Core 2 T0 Effective Cl...</div>
<div class="t" style="right:827.80px;transform-origin:100% 0;top:726.93px;font-size:14.6px;font-weight:400;color:#ececec;transform:scaleX(0.9836);-webkit-text-stroke:0.15px #ececec;">267,03</div>
<div class="t" style="right:716.00px;transform-origin:100% 0;top:726.93px;font-size:14.6px;font-weight:400;color:#ececec;transform:scaleX(0.9836);-webkit-text-stroke:0.15px #ececec;">101,20</div>
<div class="t" style="right:605.00px;transform-origin:100% 0;top:726.93px;font-size:14.6px;font-weight:400;color:#ececec;transform:scaleX(0.9836);-webkit-text-stroke:0.15px #ececec;">185,06</div>
<div class="t" style="right:493.70px;transform-origin:100% 0;top:726.93px;font-size:14.6px;font-weight:400;color:#ececec;transform:scaleX(0.9836);-webkit-text-stroke:0.15px #ececec;">624,13</div>
<div class="t" style="left:638.30px;transform-origin:0 0;top:753.26px;font-size:14.6px;font-weight:400;color:#ececec;transform:scaleX(0.9754);-webkit-text-stroke:0.15px #ececec;">Core 2 T1 Effective Cl...</div>
<div class="t" style="right:827.80px;transform-origin:100% 0;top:753.26px;font-size:14.6px;font-weight:400;color:#ececec;transform:scaleX(0.9836);-webkit-text-stroke:0.15px #ececec;">22,81</div>
<div class="t" style="right:716.00px;transform-origin:100% 0;top:753.26px;font-size:14.6px;font-weight:400;color:#ececec;transform:scaleX(0.9836);-webkit-text-stroke:0.15px #ececec;">11,27</div>
<div class="t" style="right:605.00px;transform-origin:100% 0;top:753.26px;font-size:14.6px;font-weight:400;color:#ececec;transform:scaleX(0.9836);-webkit-text-stroke:0.15px #ececec;">55,26</div>
<div class="t" style="right:493.70px;transform-origin:100% 0;top:753.26px;font-size:14.6px;font-weight:400;color:#ececec;transform:scaleX(0.9836);-webkit-text-stroke:0.15px #ececec;">128,14</div>
<div class="t" style="left:638.30px;transform-origin:0 0;top:779.59px;font-size:14.6px;font-weight:400;color:#ececec;transform:scaleX(0.9754);-webkit-text-stroke:0.15px #ececec;">Core 3 T0 Effective Cl...</div>
<div class="t" style="right:827.80px;transform-origin:100% 0;top:779.59px;font-size:14.6px;font-weight:400;color:#ececec;transform:scaleX(0.9836);-webkit-text-stroke:0.15px #ececec;">144,10</div>
<div class="t" style="right:716.00px;transform-origin:100% 0;top:779.59px;font-size:14.6px;font-weight:400;color:#ececec;transform:scaleX(0.9836);-webkit-text-stroke:0.15px #ececec;">52,64</div>
<div class="t" style="right:605.00px;transform-origin:100% 0;top:779.59px;font-size:14.6px;font-weight:400;color:#ececec;transform:scaleX(0.9836);-webkit-text-stroke:0.15px #ececec;">129,44</div>
<div class="t" style="right:493.70px;transform-origin:100% 0;top:779.59px;font-size:14.6px;font-weight:400;color:#ececec;transform:scaleX(0.9836);-webkit-text-stroke:0.15px #ececec;">990,27</div>
<div class="t" style="left:638.30px;transform-origin:0 0;top:805.92px;font-size:14.6px;font-weight:400;color:#ececec;transform:scaleX(0.9754);-webkit-text-stroke:0.15px #ececec;">Core 3 T1 Effective Cl...</div>
<div class="t" style="right:827.80px;transform-origin:100% 0;top:805.92px;font-size:14.6px;font-weight:400;color:#ececec;transform:scaleX(0.9836);-webkit-text-stroke:0.15px #ececec;">102,55</div>
<div class="t" style="right:716.00px;transform-origin:100% 0;top:805.92px;font-size:14.6px;font-weight:400;color:#ececec;transform:scaleX(0.9836);-webkit-text-stroke:0.15px #ececec;">20,28</div>
<div class="t" style="right:605.00px;transform-origin:100% 0;top:805.92px;font-size:14.6px;font-weight:400;color:#ececec;transform:scaleX(0.9836);-webkit-text-stroke:0.15px #ececec;">77,86</div>
<div class="t" style="right:493.70px;transform-origin:100% 0;top:805.92px;font-size:14.6px;font-weight:400;color:#ececec;transform:scaleX(0.9836);-webkit-text-stroke:0.15px #ececec;">265,44</div>
<div class="t" style="left:638.30px;transform-origin:0 0;top:832.25px;font-size:14.6px;font-weight:400;color:#ececec;transform:scaleX(0.9754);-webkit-text-stroke:0.15px #ececec;">Core 4 T0 Effective Cl...</div>
<div class="t" style="right:827.80px;transform-origin:100% 0;top:832.25px;font-size:14.6px;font-weight:400;color:#ececec;transform:scaleX(0.9836);-webkit-text-stroke:0.15px #ececec;">103,11</div>
<div class="t" style="right:716.00px;transform-origin:100% 0;top:832.25px;font-size:14.6px;font-weight:400;color:#ececec;transform:scaleX(0.9836);-webkit-text-stroke:0.15px #ececec;">33,44</div>
<div class="t" style="right:605.00px;transform-origin:100% 0;top:832.25px;font-size:14.6px;font-weight:400;color:#ececec;transform:scaleX(0.9836);-webkit-text-stroke:0.15px #ececec;">84,56</div>
<div class="t" style="right:493.70px;transform-origin:100% 0;top:832.25px;font-size:14.6px;font-weight:400;color:#ececec;transform:scaleX(0.9836);-webkit-text-stroke:0.15px #ececec;">180,59</div>
<div class="t" style="left:638.30px;transform-origin:0 0;top:858.58px;font-size:14.6px;font-weight:400;color:#ececec;transform:scaleX(0.9754);-webkit-text-stroke:0.15px #ececec;">Core 4 T1 Effective Cl...</div>
<div class="t" style="right:827.80px;transform-origin:100% 0;top:858.58px;font-size:14.6px;font-weight:400;color:#ececec;transform:scaleX(0.9836);-webkit-text-stroke:0.15px #ececec;">53,91</div>
<div class="t" style="right:716.00px;transform-origin:100% 0;top:858.58px;font-size:14.6px;font-weight:400;color:#ececec;transform:scaleX(0.9836);-webkit-text-stroke:0.15px #ececec;">15,72</div>
<div class="t" style="right:605.00px;transform-origin:100% 0;top:858.58px;font-size:14.6px;font-weight:400;color:#ececec;transform:scaleX(0.9836);-webkit-text-stroke:0.15px #ececec;">61,92</div>
<div class="t" style="right:493.70px;transform-origin:100% 0;top:858.58px;font-size:14.6px;font-weight:400;color:#ececec;transform:scaleX(0.9836);-webkit-text-stroke:0.15px #ececec;">183,34</div>
<div class="t" style="left:638.30px;transform-origin:0 0;top:884.91px;font-size:14.6px;font-weight:400;color:#ececec;transform:scaleX(0.9754);-webkit-text-stroke:0.15px #ececec;">Core 5 T0 Effective Cl...</div>
<div class="t" style="right:827.80px;transform-origin:100% 0;top:884.91px;font-size:14.6px;font-weight:400;color:#ececec;transform:scaleX(0.9836);-webkit-text-stroke:0.15px #ececec;">328,27</div>
<div class="t" style="right:716.00px;transform-origin:100% 0;top:884.91px;font-size:14.6px;font-weight:400;color:#ececec;transform:scaleX(0.9836);-webkit-text-stroke:0.15px #ececec;">207,89</div>
<div class="t" style="right:605.00px;transform-origin:100% 0;top:884.91px;font-size:14.6px;font-weight:400;color:#ececec;transform:scaleX(0.9836);-webkit-text-stroke:0.15px #ececec;">302,27</div>
<div class="t" style="right:493.70px;transform-origin:100% 0;top:884.91px;font-size:14.6px;font-weight:400;color:#ececec;transform:scaleX(0.9836);-webkit-text-stroke:0.15px #ececec;">393,01</div>
<div class="t" style="left:638.30px;transform-origin:0 0;top:911.24px;font-size:14.6px;font-weight:400;color:#ececec;transform:scaleX(0.9754);-webkit-text-stroke:0.15px #ececec;">Core 5 T1 Effective Cl...</div>
<div class="t" style="right:827.80px;transform-origin:100% 0;top:911.24px;font-size:14.6px;font-weight:400;color:#ececec;transform:scaleX(0.9836);-webkit-text-stroke:0.15px #ececec;">20,45</div>
<div class="t" style="right:716.00px;transform-origin:100% 0;top:911.24px;font-size:14.6px;font-weight:400;color:#ececec;transform:scaleX(0.9836);-webkit-text-stroke:0.15px #ececec;">10,31</div>
<div class="t" style="right:605.00px;transform-origin:100% 0;top:911.24px;font-size:14.6px;font-weight:400;color:#ececec;transform:scaleX(0.9836);-webkit-text-stroke:0.15px #ececec;">32,75</div>
<div class="t" style="right:493.70px;transform-origin:100% 0;top:911.24px;font-size:14.6px;font-weight:400;color:#ececec;transform:scaleX(0.9836);-webkit-text-stroke:0.15px #ececec;">93,62</div>
<div class="t" style="left:638.30px;transform-origin:0 0;top:937.57px;font-size:14.6px;font-weight:400;color:#ececec;transform:scaleX(0.9754);-webkit-text-stroke:0.15px #ececec;">Core 6 T0 Effective Cl...</div>
<div class="t" style="right:827.80px;transform-origin:100% 0;top:937.57px;font-size:14.6px;font-weight:400;color:#ececec;transform:scaleX(0.9836);-webkit-text-stroke:0.15px #ececec;">55,85</div>
<div class="t" style="right:716.00px;transform-origin:100% 0;top:937.57px;font-size:14.6px;font-weight:400;color:#ececec;transform:scaleX(0.9836);-webkit-text-stroke:0.15px #ececec;">20,64</div>
<div class="t" style="right:605.00px;transform-origin:100% 0;top:937.57px;font-size:14.6px;font-weight:400;color:#ececec;transform:scaleX(0.9836);-webkit-text-stroke:0.15px #ececec;">50,08</div>
<div class="t" style="right:493.70px;transform-origin:100% 0;top:937.57px;font-size:14.6px;font-weight:400;color:#ececec;transform:scaleX(0.9836);-webkit-text-stroke:0.15px #ececec;">119,01</div>
<div class="t" style="left:638.30px;transform-origin:0 0;top:963.90px;font-size:14.6px;font-weight:400;color:#ececec;transform:scaleX(0.9754);-webkit-text-stroke:0.15px #ececec;">Core 6 T1 Effective Cl...</div>
<div class="t" style="right:827.80px;transform-origin:100% 0;top:963.90px;font-size:14.6px;font-weight:400;color:#ececec;transform:scaleX(0.9836);-webkit-text-stroke:0.15px #ececec;">45,35</div>
<div class="t" style="right:716.00px;transform-origin:100% 0;top:963.90px;font-size:14.6px;font-weight:400;color:#ececec;transform:scaleX(0.9836);-webkit-text-stroke:0.15px #ececec;">25,07</div>
<div class="t" style="right:605.00px;transform-origin:100% 0;top:963.90px;font-size:14.6px;font-weight:400;color:#ececec;transform:scaleX(0.9836);-webkit-text-stroke:0.15px #ececec;">45,32</div>
<div class="t" style="right:493.70px;transform-origin:100% 0;top:963.90px;font-size:14.6px;font-weight:400;color:#ececec;transform:scaleX(0.9836);-webkit-text-stroke:0.15px #ececec;">100,94</div>
<div class="t" style="left:638.30px;transform-origin:0 0;top:990.23px;font-size:14.6px;font-weight:400;color:#ececec;transform:scaleX(0.9754);-webkit-text-stroke:0.15px #ececec;">Core 7 T0 Effective Cl...</div>
<div class="t" style="right:827.80px;transform-origin:100% 0;top:990.23px;font-size:14.6px;font-weight:400;color:#ececec;transform:scaleX(0.9836);-webkit-text-stroke:0.15px #ececec;">49,18</div>
<div class="t" style="right:716.00px;transform-origin:100% 0;top:990.23px;font-size:14.6px;font-weight:400;color:#ececec;transform:scaleX(0.9836);-webkit-text-stroke:0.15px #ececec;">34,31</div>
<div class="t" style="right:605.00px;transform-origin:100% 0;top:990.23px;font-size:14.6px;font-weight:400;color:#ececec;transform:scaleX(0.9836);-webkit-text-stroke:0.15px #ececec;">67,46</div>
<div class="t" style="right:493.70px;transform-origin:100% 0;top:990.23px;font-size:14.6px;font-weight:400;color:#ececec;transform:scaleX(0.9836);-webkit-text-stroke:0.15px #ececec;">114,12</div>
<div class="t" style="left:638.30px;transform-origin:0 0;top:1016.56px;font-size:14.6px;font-weight:400;color:#ececec;transform:scaleX(0.9754);-webkit-text-stroke:0.15px #ececec;">Core 7 T1 Effective Cl...</div>
<div class="t" style="right:827.80px;transform-origin:100% 0;top:1016.56px;font-size:14.6px;font-weight:400;color:#ececec;transform:scaleX(0.9836);-webkit-text-stroke:0.15px #ececec;">268,98</div>
<div class="t" style="right:716.00px;transform-origin:100% 0;top:1016.56px;font-size:14.6px;font-weight:400;color:#ececec;transform:scaleX(0.9836);-webkit-text-stroke:0.15px #ececec;">39,97</div>
<div class="t" style="right:605.00px;transform-origin:100% 0;top:1016.56px;font-size:14.6px;font-weight:400;color:#ececec;transform:scaleX(0.9836);-webkit-text-stroke:0.15px #ececec;">103,47</div>
<div class="t" style="right:493.70px;transform-origin:100% 0;top:1016.56px;font-size:14.6px;font-weight:400;color:#ececec;transform:scaleX(0.9836);-webkit-text-stroke:0.15px #ececec;">268,98</div>
<div class="t" style="left:1321.90px;transform-origin:0 0;top:95.28px;font-size:14.2px;font-weight:400;color:#f2f2f2;transform:scaleX(1.0168);-webkit-text-stroke:0.25px #f2f2f2;">GPU Temperature</div>
<div class="t" style="right:42.60px;transform-origin:100% 0;top:95.28px;font-size:14.2px;font-weight:400;color:#f2f2f2;transform:scaleX(0.9855);">36,66</div>
<div class="t" style="right:440.50px;transform-origin:100% 0;top:139.62px;font-size:12.5px;font-weight:400;color:#e8e8e8;">40</div>
<div class="t" style="right:440.50px;transform-origin:100% 0;top:203.42px;font-size:12.5px;font-weight:400;color:#e8e8e8;">20</div>
<div class="t" style="right:440.50px;transform-origin:100% 0;top:267.22px;font-size:12.5px;font-weight:400;color:#e8e8e8;">0</div>
<div class="t" style="left:1321.90px;transform-origin:0 0;top:308.28px;font-size:14.2px;font-weight:400;color:#f2f2f2;transform:scaleX(1.0168);-webkit-text-stroke:0.25px #f2f2f2;">GPU Temperature</div>
<div class="t" style="right:42.60px;transform-origin:100% 0;top:308.28px;font-size:14.2px;font-weight:400;color:#f2f2f2;transform:scaleX(0.9855);">35,03</div>
<div class="t" style="right:440.50px;transform-origin:100% 0;top:346.42px;font-size:12.5px;font-weight:400;color:#e8e8e8;">40</div>
<div class="t" style="right:440.50px;transform-origin:100% 0;top:413.72px;font-size:12.5px;font-weight:400;color:#e8e8e8;">20</div>
<div class="t" style="right:440.50px;transform-origin:100% 0;top:480.42px;font-size:12.5px;font-weight:400;color:#e8e8e8;">0</div>
<div class="t" style="left:1321.90px;transform-origin:0 0;top:522.08px;font-size:14.2px;font-weight:400;color:#f2f2f2;transform:scaleX(0.9546);-webkit-text-stroke:0.25px #f2f2f2;">Core 0 VID</div>
<div class="t" style="right:42.60px;transform-origin:100% 0;top:522.08px;font-size:14.2px;font-weight:400;color:#f2f2f2;transform:scaleX(0.9855);">1,060</div>
<div class="t" style="right:440.50px;transform-origin:100% 0;top:574.32px;font-size:12.5px;font-weight:400;color:#e8e8e8;">1</div>
<div class="t" style="right:440.50px;transform-origin:100% 0;top:634.12px;font-size:12.5px;font-weight:400;color:#e8e8e8;">0,5</div>
<div class="t" style="right:440.50px;transform-origin:100% 0;top:694.02px;font-size:12.5px;font-weight:400;color:#e8e8e8;">0</div>
<div class="t" style="left:1321.90px;transform-origin:0 0;top:735.68px;font-size:14.2px;font-weight:400;color:#f2f2f2;transform:scaleX(0.9512);-webkit-text-stroke:0.25px #f2f2f2;">GPU Core Voltage (VDDCR_GFX)</div>
<div class="t" style="right:42.60px;transform-origin:100% 0;top:735.68px;font-size:14.2px;font-weight:400;color:#f2f2f2;transform:scaleX(0.9855);">0,700</div>
<div class="t" style="right:440.50px;transform-origin:100% 0;top:816.02px;font-size:12.5px;font-weight:400;color:#e8e8e8;">0,5</div>
<div class="t" style="right:440.50px;transform-origin:100% 0;top:907.22px;font-size:12.5px;font-weight:400;color:#e8e8e8;">0</div>
<div class="t" style="left:1321.90px;transform-origin:0 0;top:948.68px;font-size:14.2px;font-weight:400;color:#f2f2f2;transform:scaleX(0.9793);-webkit-text-stroke:0.25px #f2f2f2;">GPU Core Voltage</div>
<div class="t" style="right:42.60px;transform-origin:100% 0;top:948.68px;font-size:14.2px;font-weight:400;color:#f2f2f2;transform:scaleX(0.9855);">0,635</div>
<div class="t" style="right:440.50px;transform-origin:100% 0;top:1019.32px;font-size:12.5px;font-weight:400;color:#e8e8e8;">0,5</div>
<div class="t" style="left:51.50px;transform-origin:0 0;top:1042.24px;font-size:12px;font-weight:400;color:#1c1c1c;transform:scaleX(1.0082);">По ощущениям...</div>
<div class="t" style="left:51.50px;transform-origin:0 0;top:1057.94px;font-size:12px;font-weight:400;color:#5a5a5a;transform:scaleX(0.9739);">Сейчас</div>
<div class="t" style="left:657.90px;transform-origin:0 0;top:1049.35px;font-size:14px;font-weight:400;color:#555;transform:scaleX(1.0052);">Поиск</div>
<div class="t" style="left:1528.70px;transform-origin:0 0;top:1050.14px;font-size:12px;font-weight:400;color:#222;transform:scaleX(0.8447);">РУС</div>
<div class="t" style="right:19.50px;transform-origin:100% 0;top:1041.54px;font-size:12px;font-weight:400;color:#1c1c1c;transform:scaleX(1.0489);">20:03</div>
<div class="t" style="right:19.50px;transform-origin:100% 0;top:1057.74px;font-size:12px;font-weight:400;color:#1c1c1c;transform:scaleX(0.9633);">27.11.2025</div>
</body></html>
